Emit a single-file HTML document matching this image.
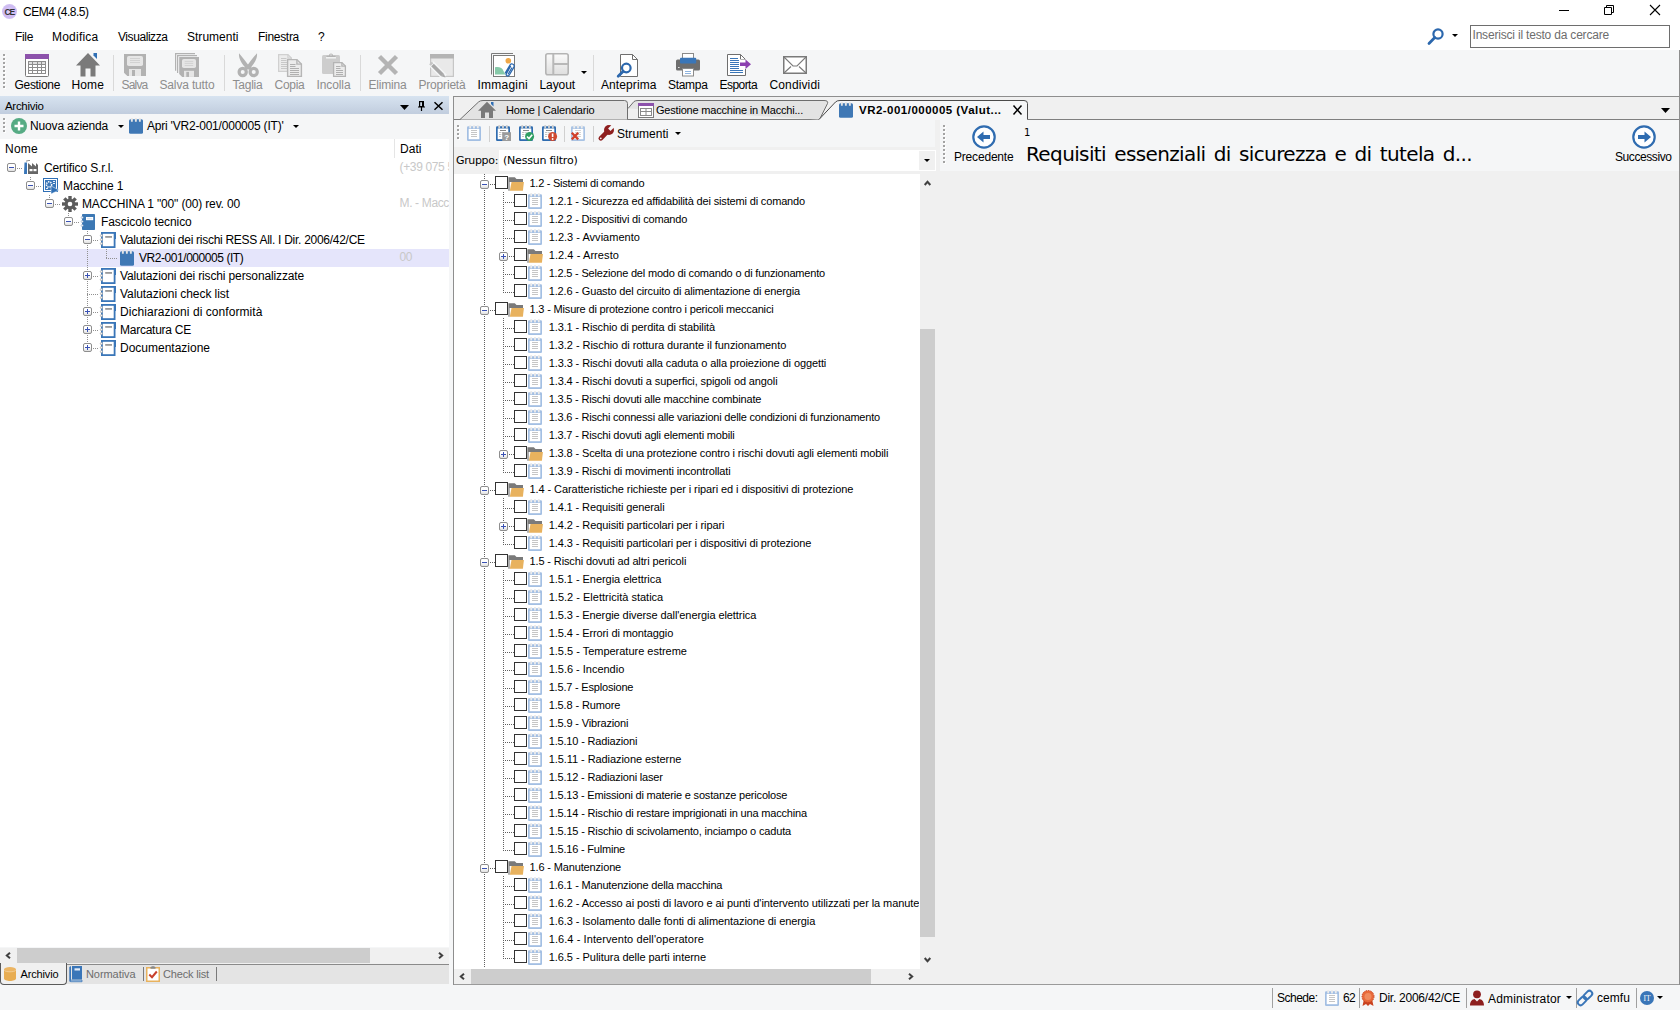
<!DOCTYPE html>
<html lang="it"><head><meta charset="utf-8"><title>CEM4 (4.8.5)</title>
<style>
html,body{margin:0;padding:0;}
body{width:1680px;height:1010px;overflow:hidden;background:#f5f6f7;position:relative;font-family:'Liberation Sans',sans-serif;font-size:12px;}
div,svg{position:absolute;}
svg{overflow:visible;}
</style></head><body>

<div style="left:0px;top:0px;width:1680px;height:50px;background:#fff"></div>
<svg style="left:2px;top:3.5px" width="15" height="15" viewBox="0 0 15 15"><defs><radialGradient id="rg1"><stop offset="0" stop-color="#e2d6fa"/><stop offset="0.700" stop-color="#cdbaf2"/><stop offset="1" stop-color="#c9b6ef" stop-opacity="0.850"/></radialGradient></defs><circle cx="7.500" cy="7.500" r="7.500" fill="url(#rg1)"/><text x="7.300" y="10.700" font-size="8.600" font-weight="bold" text-anchor="middle" font-family="Liberation Sans, sans-serif" fill="#333" letter-spacing="-1.200">CE</text></svg>
<div style="left:23px;top:5px;height:14px;line-height:14px;font-size:12px;color:#000;font-family:'Liberation Sans', sans-serif;white-space:pre;letter-spacing:-0.488px;">CEM4 (4.8.5)</div>
<div style="left:1559px;top:10px;width:10px;height:1px;background:#000"></div>
<svg style="left:1604px;top:5px" width="10" height="10" viewBox="0 0 10 10"><path d="M0.5 2.5h7v7h-7z M2.5 2.5v-2h7v7h-2" stroke="#000" stroke-width="1" fill="none"/></svg>
<svg style="left:1650px;top:5px" width="10" height="10" viewBox="0 0 10 10"><path d="M0 0L10 10M10 0L0 10" stroke="#000" stroke-width="1.1" fill="none"/></svg>
<div style="left:15px;top:30px;height:14px;line-height:14px;font-size:12px;color:#000;font-family:'Liberation Sans', sans-serif;white-space:pre;letter-spacing:-0.336px;">File</div>
<div style="left:52px;top:30px;height:14px;line-height:14px;font-size:12px;color:#000;font-family:'Liberation Sans', sans-serif;white-space:pre;letter-spacing:0.227px;">Modifica</div>
<div style="left:118px;top:30px;height:14px;line-height:14px;font-size:12px;color:#000;font-family:'Liberation Sans', sans-serif;white-space:pre;letter-spacing:-0.431px;">Visualizza</div>
<div style="left:187px;top:30px;height:14px;line-height:14px;font-size:12px;color:#000;font-family:'Liberation Sans', sans-serif;white-space:pre;letter-spacing:0.016px;">Strumenti</div>
<div style="left:258px;top:30px;height:14px;line-height:14px;font-size:12px;color:#000;font-family:'Liberation Sans', sans-serif;white-space:pre;letter-spacing:-0.295px;">Finestra</div>
<div style="left:318px;top:30px;height:14px;line-height:14px;font-size:12px;color:#000;font-family:'Liberation Sans', sans-serif;white-space:pre;letter-spacing:-1.188px;">?</div>
<svg style="left:1427px;top:27px" width="18" height="18" viewBox="0 0 18 18"><circle cx="11" cy="7" r="4.6" fill="none" stroke="#2b67ad" stroke-width="2.2"/><path d="M7.8 10.6L2 16.4" stroke="#2b67ad" stroke-width="2.8" stroke-linecap="round"/></svg>
<svg style="left:1452px;top:34px" width="6" height="3" viewBox="0 0 6 3"><path d="M0 0h6l-3 3z" fill="#000"/></svg>
<div style="left:1470px;top:25px;width:200px;height:23px;border:1px solid #6e6e6e;background:#fff;box-sizing:border-box"></div>
<div style="left:1472.5px;top:28px;height:14px;line-height:14px;font-size:12px;color:#6d6d6d;font-family:'Liberation Sans', sans-serif;white-space:pre;letter-spacing:-0.192px;">Inserisci il testo da cercare</div>
<div style="left:0px;top:50px;width:1680px;height:46px;background:#f5f6f7"></div>
<div style="left:4px;top:55px;width:2px;height:2px;background:#fff"></div>
<div style="left:3px;top:54px;width:2px;height:2px;background:#a3a3a3"></div>
<div style="left:4px;top:59px;width:2px;height:2px;background:#fff"></div>
<div style="left:3px;top:58px;width:2px;height:2px;background:#a3a3a3"></div>
<div style="left:4px;top:63px;width:2px;height:2px;background:#fff"></div>
<div style="left:3px;top:62px;width:2px;height:2px;background:#a3a3a3"></div>
<div style="left:4px;top:67px;width:2px;height:2px;background:#fff"></div>
<div style="left:3px;top:66px;width:2px;height:2px;background:#a3a3a3"></div>
<div style="left:4px;top:71px;width:2px;height:2px;background:#fff"></div>
<div style="left:3px;top:70px;width:2px;height:2px;background:#a3a3a3"></div>
<div style="left:4px;top:75px;width:2px;height:2px;background:#fff"></div>
<div style="left:3px;top:74px;width:2px;height:2px;background:#a3a3a3"></div>
<div style="left:4px;top:79px;width:2px;height:2px;background:#fff"></div>
<div style="left:3px;top:78px;width:2px;height:2px;background:#a3a3a3"></div>
<div style="left:4px;top:83px;width:2px;height:2px;background:#fff"></div>
<div style="left:3px;top:82px;width:2px;height:2px;background:#a3a3a3"></div>
<div style="left:4px;top:87px;width:2px;height:2px;background:#fff"></div>
<div style="left:3px;top:86px;width:2px;height:2px;background:#a3a3a3"></div>
<svg style="left:25px;top:54px" width="24" height="24" viewBox="0 0 24 24"><rect x="0.500" y="0.500" width="23" height="22" rx="1" fill="#fff" stroke="#7a7a7a"/><rect x="0" y="0" width="24" height="5" fill="#8c52ab"/><rect x="3" y="7" width="18" height="13" fill="#8d8d8d"/><rect x="4" y="8" width="3" height="2" fill="#dedede"/><rect x="8" y="8" width="4" height="2" fill="#dedede"/><rect x="13" y="8" width="3" height="2" fill="#dedede"/><rect x="17" y="8" width="3" height="2" fill="#dedede"/><rect x="4" y="11" width="3" height="2" fill="#fff"/><rect x="8" y="11" width="4" height="2" fill="#fff"/><rect x="13" y="11" width="3" height="2" fill="#fff"/><rect x="17" y="11" width="3" height="2" fill="#fff"/><rect x="4" y="14" width="3" height="2" fill="#fff"/><rect x="8" y="14" width="4" height="2" fill="#fff"/><rect x="13" y="14" width="3" height="2" fill="#fff"/><rect x="17" y="14" width="3" height="2" fill="#fff"/><rect x="4" y="17" width="3" height="2" fill="#fff"/><rect x="8" y="17" width="4" height="2" fill="#fff"/><rect x="13" y="17" width="3" height="2" fill="#fff"/><rect x="17" y="17" width="3" height="2" fill="#fff"/></svg>
<div style="left:14.5px;top:78px;height:14px;line-height:14px;font-size:12px;color:#000;font-family:'Liberation Sans', sans-serif;white-space:pre;letter-spacing:-0.316px;">Gestione</div>
<svg style="left:76px;top:53px" width="24" height="24" viewBox="0 0 24 24"><path d="M17.5 0H21V6L17.5 2.500z" fill="#2f6fb5"/><path d="M12 0L0 12.500H4.500V23.500H9.500V15.500H14.500V23.500H19.500V12.500H24z" fill="#7a7a7a"/></svg>
<div style="left:71.5px;top:78px;height:14px;line-height:14px;font-size:12px;color:#000;font-family:'Liberation Sans', sans-serif;white-space:pre;letter-spacing:0.121px;">Home</div>
<svg style="left:124px;top:54px" width="24" height="24" viewBox="0 0 24 24"><path d="M0 0H22V22H3.300L0 18.700z" fill="#b2b2b2"/><rect x="3" y="2" width="16" height="10" rx="1.800" fill="#e6e6e6"/><path d="M6 4.500H16M6 6.500H16M6 8.500H16" stroke="#cfcfcf" stroke-width="0.900"/><rect x="5" y="15" width="12" height="7" fill="#e6e6e6"/><rect x="8" y="16" width="3" height="6" fill="#b2b2b2"/></svg>
<div style="left:121.5px;top:78px;height:14px;line-height:14px;font-size:12px;color:#8d8d8d;font-family:'Liberation Sans', sans-serif;white-space:pre;letter-spacing:-0.806px;">Salva</div>
<svg style="left:175px;top:53px" width="24" height="24" viewBox="0 0 24 24"><path d="M0.600 17.800V0.600H20" fill="none" stroke="#b2b2b2" stroke-width="1.200"/><path d="M2.600 19.900V2.700H22" fill="none" stroke="#b2b2b2" stroke-width="1.200"/><g transform="translate(4.200,4.100)"><path d="M0 0H19.800V19.800H3L0 16.800z" fill="#b2b2b2"/><rect x="2.800" y="1.900" width="14" height="9" rx="1.800" fill="#e6e6e6"/><path d="M5.500 4.300H14M5.500 6.300H14M5.500 8.400H14" stroke="#cfcfcf" stroke-width="0.900"/><rect x="4.800" y="13.700" width="10" height="6.100" fill="#e6e6e6"/><rect x="7.100" y="14.800" width="2.700" height="5" fill="#b2b2b2"/></g></svg>
<div style="left:159.5px;top:78px;height:14px;line-height:14px;font-size:12px;color:#8d8d8d;font-family:'Liberation Sans', sans-serif;white-space:pre;letter-spacing:-0.155px;">Salva tutto</div>
<svg style="left:236px;top:54px" width="24" height="24" viewBox="0 0 24 24"><path d="M3 -0.800C2.500 4 5 9 10.500 15L14.200 13.500C10.500 8.500 6.500 3 3 -0.800z" fill="#b2b2b2"/><path d="M21 -0.800C21.500 4 19 9 13.500 15L9.800 13.500C13.500 8.500 17.500 3 21 -0.800z" fill="#b2b2b2"/><path d="M9.500 12.500H14.500L16.500 15.500H7.500z" fill="#b2b2b2"/><circle cx="6.700" cy="18" r="3.600" fill="none" stroke="#b2b2b2" stroke-width="3.200"/><circle cx="17.700" cy="18" r="3.600" fill="none" stroke="#b2b2b2" stroke-width="3.200"/></svg>
<div style="left:232.5px;top:78px;height:14px;line-height:14px;font-size:12px;color:#8d8d8d;font-family:'Liberation Sans', sans-serif;white-space:pre;letter-spacing:-0.227px;">Taglia</div>
<svg style="left:278px;top:54px" width="24" height="24" viewBox="0 0 24 24"><path d="M0.6 0.6H9.9L13.4 4.1V17.4H0.6z" fill="#ececec" stroke="#d0d0d0" stroke-width="1.2"/><path d="M9.9 0.6V4.1H13.4" fill="none" stroke="#d0d0d0" stroke-width="1.2"/><path d="M3 4.5H8.5" stroke="#c8c8c8" stroke-width="1"/><path d="M3 6.5H8.5" stroke="#c8c8c8" stroke-width="1"/><path d="M3 8.5H11" stroke="#c8c8c8" stroke-width="1"/><path d="M3 10.5H11" stroke="#c8c8c8" stroke-width="1"/><path d="M3 12.5H11" stroke="#c8c8c8" stroke-width="1"/><path d="M3 14.5H11" stroke="#c8c8c8" stroke-width="1"/><path d="M9.6 5.6H18.9L23.4 10.1V22.4H9.6z" fill="#ececec" stroke="#b6b6b6" stroke-width="1.4"/><path d="M18.9 5.6V10.1H23.4" fill="none" stroke="#b6b6b6" stroke-width="1.4"/><path d="M12 10.5H17.5" stroke="#b0b0b0" stroke-width="1"/><path d="M12 12.5H17.5" stroke="#b0b0b0" stroke-width="1"/><path d="M12 14.5H21" stroke="#b0b0b0" stroke-width="1"/><path d="M12 16.5H21" stroke="#b0b0b0" stroke-width="1"/><path d="M12 18.5H21" stroke="#b0b0b0" stroke-width="1"/><path d="M12 20.5H21" stroke="#b0b0b0" stroke-width="1"/></svg>
<div style="left:274.5px;top:78px;height:14px;line-height:14px;font-size:12px;color:#8d8d8d;font-family:'Liberation Sans', sans-serif;white-space:pre;letter-spacing:-0.272px;">Copia</div>
<svg style="left:322px;top:54px" width="24" height="24" viewBox="0 0 24 24"><rect x="0" y="1" width="18" height="19" rx="1.500" fill="#cdcdcd"/><path d="M4 3.800H14" stroke="#f5f6f7" stroke-width="1.400"/><path d="M4.500 3V1.800H7C7 -1.200 11 -1.200 11 1.800H13.500V3z" fill="#b4b4b4"/><circle cx="9" cy="0.900" r="0.700" fill="#f5f6f7"/><path d="M11.6 8.6H19.9L23.4 12.1V22.4H11.6z" fill="#ececec" stroke="#b4b4b4" stroke-width="1.3"/><path d="M19.9 8.6V12.1H23.4" fill="none" stroke="#b4b4b4" stroke-width="1.3"/><path d="M14 12.5H18.5" stroke="#b0b0b0" stroke-width="1"/><path d="M14 14.5H18.5" stroke="#b0b0b0" stroke-width="1"/><path d="M14 16.5H21" stroke="#b0b0b0" stroke-width="1"/><path d="M14 18.5H21" stroke="#b0b0b0" stroke-width="1"/><path d="M14 20.5H21" stroke="#b0b0b0" stroke-width="1"/></svg>
<div style="left:316.5px;top:78px;height:14px;line-height:14px;font-size:12px;color:#8d8d8d;font-family:'Liberation Sans', sans-serif;white-space:pre;letter-spacing:-0.098px;">Incolla</div>
<svg style="left:378px;top:55px" width="24" height="24" viewBox="0 0 24 24"><path d="M1.500 1.500L18.500 18.500M18.500 1.500L1.500 18.500" stroke="#b4b4b4" stroke-width="4.400" fill="none"/></svg>
<div style="left:368.5px;top:78px;height:14px;line-height:14px;font-size:12px;color:#8d8d8d;font-family:'Liberation Sans', sans-serif;white-space:pre;letter-spacing:-0.194px;">Elimina</div>
<svg style="left:430px;top:54px" width="24" height="24" viewBox="0 0 24 24"><rect x="0.600" y="0.600" width="22.800" height="21.800" fill="#e9e9e9" stroke="#c6c6c6" stroke-width="1.200"/><rect x="0" y="0" width="24" height="4.500" fill="#b4b4b4"/><path d="M1 9.500L14.500 23" stroke="#f5f6f7" stroke-width="6.500" fill="none"/><path d="M2.500 11L12.500 21" stroke="#a8a8a8" stroke-width="3.800" fill="none"/><path d="M0.500 9L2 10.500" stroke="#c4c4c4" stroke-width="3.800" fill="none"/><path d="M11.200 22.300L13.800 19.700L15.500 23.500z" fill="#a8a8a8"/></svg>
<div style="left:418.5px;top:78px;height:14px;line-height:14px;font-size:12px;color:#8d8d8d;font-family:'Liberation Sans', sans-serif;white-space:pre;letter-spacing:-0.189px;">Proprietà</div>
<svg style="left:491px;top:53px" width="24" height="24" viewBox="0 0 24 24"><path d="M0.500 21.500V0.500H22" fill="none" stroke="#7a7a7a"/><rect x="2.500" y="2.500" width="21" height="21" fill="#fff" stroke="#7a7a7a"/><circle cx="17.300" cy="7.700" r="2.800" fill="#f0a848"/><path d="M4 21.500V14.300C8 13.300 11.500 15 12.500 18L14.500 21.500z" fill="#86c9a9"/><g fill="none" stroke="#2b67ad" stroke-width="1.300" stroke-linecap="round"><path d="M19.500 13.500L15.500 20.300C14.300 22.500 17 24 18.300 22L22.800 14.300C24.300 11.700 20.500 9.500 19 12.100L14.500 19.700"/><path d="M20.800 15L17.300 21"/></g></svg>
<div style="left:477.5px;top:78px;height:14px;line-height:14px;font-size:12px;color:#000;font-family:'Liberation Sans', sans-serif;white-space:pre;letter-spacing:0.227px;">Immagini</div>
<svg style="left:545px;top:53px" width="24" height="24" viewBox="0 0 24 24"><defs><linearGradient id="lg1" x1="0" y1="0" x2="0" y2="1"><stop offset="0" stop-color="#fbfbfb"/><stop offset="1" stop-color="#dedede"/></linearGradient></defs><rect x="0.800" y="0.800" width="22.400" height="20.900" rx="2" fill="url(#lg1)" stroke="#b4b4b4" stroke-width="1.600"/><path d="M8.300 1V21.500M8.300 11H23" stroke="#b8b8b8" stroke-width="2" fill="none"/></svg>
<div style="left:539.5px;top:78px;height:14px;line-height:14px;font-size:12px;color:#000;font-family:'Liberation Sans', sans-serif;white-space:pre;letter-spacing:-0.089px;">Layout</div>
<svg style="left:581px;top:71px" width="6" height="3" viewBox="0 0 6 3"><path d="M0 0h6l-3 3z" fill="#000"/></svg>
<svg style="left:617px;top:54px" width="24" height="24" viewBox="0 0 24 24"><path d="M3.500 0.500H15.500L20.500 5.500V22.500H3.500z" fill="#fff" stroke="#6e6e6e"/><path d="M15.500 0.500V5.500H20.500" fill="none" stroke="#6e6e6e"/><circle cx="9.300" cy="14" r="4.300" fill="#fff" stroke="#2b67ad" stroke-width="2.200"/><path d="M6 17.500L1.200 22.300" stroke="#2b67ad" stroke-width="2.800" stroke-linecap="round"/></svg>
<div style="left:601px;top:78px;height:14px;line-height:14px;font-size:12px;color:#000;font-family:'Liberation Sans', sans-serif;white-space:pre;letter-spacing:0.089px;">Anteprima</div>
<svg style="left:676px;top:53px" width="24" height="24" viewBox="0 0 24 24"><rect x="6.500" y="0.500" width="11" height="6" fill="#fff" stroke="#8a8a8a"/><rect x="0" y="6.500" width="24" height="11" rx="1.500" fill="#6e6e6e"/><rect x="4" y="4.800" width="16.200" height="5.700" rx="1" fill="#3a76b8"/><rect x="2" y="14" width="1.600" height="1" fill="#e0e0e0"/><rect x="6.500" y="15.500" width="11" height="7.500" fill="#fff" stroke="#8a8a8a"/><path d="M9 18.500H15M9 20.500H15" stroke="#8fb4de" stroke-width="1"/></svg>
<div style="left:668px;top:78px;height:14px;line-height:14px;font-size:12px;color:#000;font-family:'Liberation Sans', sans-serif;white-space:pre;letter-spacing:-0.31px;">Stampa</div>
<svg style="left:727px;top:54px" width="24" height="24" viewBox="0 0 24 24"><path d="M0.500 0.500H13.500L18.500 5.500V21.500H0.500z" fill="#fff" stroke="#6e6e6e"/><path d="M13.500 0.500V5.500H18.500" fill="none" stroke="#6e6e6e"/><path d="M3 4.5H11" stroke="#3a76b8" stroke-width="1"/><path d="M3 6.5H16" stroke="#3a76b8" stroke-width="1"/><path d="M3 8.5H16" stroke="#3a76b8" stroke-width="1"/><path d="M3 10.5H16" stroke="#3a76b8" stroke-width="1"/><path d="M3 12.5H16" stroke="#3a76b8" stroke-width="1"/><path d="M3 14.5H16" stroke="#3a76b8" stroke-width="1"/><path d="M3 16.5H16" stroke="#3a76b8" stroke-width="1"/><path d="M3 18.5H16" stroke="#3a76b8" stroke-width="1"/><path d="M12 5.500H19V15H12z" fill="#fff"/><path d="M13 8.500H18.500V5.500L24 10.200L18.500 15V12H13z" fill="#8c3fb0"/></svg>
<div style="left:719.5px;top:78px;height:14px;line-height:14px;font-size:12px;color:#000;font-family:'Liberation Sans', sans-serif;white-space:pre;letter-spacing:-0.551px;">Esporta</div>
<svg style="left:783px;top:56px" width="24" height="24" viewBox="0 0 24 24"><rect x="0.750" y="0.750" width="22.500" height="16.500" fill="#fff" stroke="#7a7a7a" stroke-width="1.500"/><path d="M1 1L10 10H14L23 1M1 17L8 10.500M23 17L16 10.500" fill="none" stroke="#7a7a7a" stroke-width="1.100"/></svg>
<div style="left:769.5px;top:78px;height:14px;line-height:14px;font-size:12px;color:#000;font-family:'Liberation Sans', sans-serif;white-space:pre;letter-spacing:0.127px;">Condividi</div>
<div style="left:113px;top:55px;width:1px;height:36px;background:#d9d9d9"></div>
<div style="left:224px;top:55px;width:1px;height:36px;background:#d9d9d9"></div>
<div style="left:360px;top:55px;width:1px;height:36px;background:#d9d9d9"></div>
<div style="left:593px;top:55px;width:1px;height:36px;background:#d9d9d9"></div>
<div style="left:0px;top:96px;width:449px;height:18px;background:linear-gradient(#d7e3f0,#c1cdde)"></div>
<div style="left:5px;top:100px;height:12px;line-height:12px;font-size:11.5px;color:#000;font-family:'Liberation Sans', sans-serif;white-space:pre;letter-spacing:-0.301px;">Archivio</div>
<svg style="left:400px;top:105px" width="9" height="5" viewBox="0 0 9 5"><path d="M0 0h9l-4.5 5z" fill="#000"/></svg>
<svg style="left:418px;top:101px" width="7" height="10" viewBox="0 0 7 10"><path d="M1.600 0.600H5.400V5.500H1.600z" fill="none" stroke="#000" stroke-width="1.200"/><path d="M4.700 0.600V5.500" stroke="#000" stroke-width="1.400"/><path d="M0 6H7M3.500 6V10" stroke="#000" stroke-width="1.200" fill="none"/></svg>
<svg style="left:434px;top:102px" width="9" height="8" viewBox="0 0 9 8"><path d="M0.500 0.300L8.500 7.700M8.500 0.300L0.500 7.700" stroke="#000" stroke-width="1.500" fill="none"/></svg>
<div style="left:0px;top:114px;width:449px;height:25px;background:#f5f6f7"></div>
<div style="left:4px;top:119px;width:2px;height:2px;background:#fff"></div>
<div style="left:3px;top:118px;width:2px;height:2px;background:#a3a3a3"></div>
<div style="left:4px;top:123px;width:2px;height:2px;background:#fff"></div>
<div style="left:3px;top:122px;width:2px;height:2px;background:#a3a3a3"></div>
<div style="left:4px;top:127px;width:2px;height:2px;background:#fff"></div>
<div style="left:3px;top:126px;width:2px;height:2px;background:#a3a3a3"></div>
<div style="left:4px;top:131px;width:2px;height:2px;background:#fff"></div>
<div style="left:3px;top:130px;width:2px;height:2px;background:#a3a3a3"></div>
<svg style="left:11px;top:118px" width="16" height="16" viewBox="0 0 16 16"><circle cx="8" cy="8" r="8" fill="#56ab84"/><path d="M8 3.500V12.500M3.500 8H12.500" stroke="#fff" stroke-width="2.400" fill="none"/></svg>
<div style="left:30px;top:119px;height:14px;line-height:14px;font-size:12px;color:#000;font-family:'Liberation Sans', sans-serif;white-space:pre;letter-spacing:-0.159px;">Nuova azienda</div>
<svg style="left:118px;top:125px" width="6" height="3" viewBox="0 0 6 3"><path d="M0 0h6l-3 3z" fill="#000"/></svg>
<svg style="left:129px;top:118px" width="14" height="16" viewBox="0 0 14 16"><rect x="0" y="1.200" width="14" height="14.600" rx="1.500" fill="#3f78b5"/><rect x="1.900" y="0" width="1.900" height="3.800" rx="0.500" fill="#e6e6e6"/><rect x="5.900" y="0" width="1.900" height="3.800" rx="0.500" fill="#e6e6e6"/><rect x="9.900" y="0" width="1.900" height="3.800" rx="0.500" fill="#e6e6e6"/></svg>
<div style="left:147px;top:119px;height:14px;line-height:14px;font-size:12px;color:#000;font-family:'Liberation Sans', sans-serif;white-space:pre;letter-spacing:-0.211px;">Apri 'VR2-001/000005 (IT)'</div>
<svg style="left:293px;top:125px" width="6" height="3" viewBox="0 0 6 3"><path d="M0 0h6l-3 3z" fill="#000"/></svg>
<div style="left:0px;top:139px;width:449px;height:808px;background:#fff"></div>
<div style="left:5px;top:142px;height:14px;line-height:14px;font-size:12px;color:#000;font-family:'Liberation Sans', sans-serif;white-space:pre;letter-spacing:0.246px;">Nome</div>
<div style="left:400px;top:142px;height:14px;line-height:14px;font-size:12px;color:#000;font-family:'Liberation Sans', sans-serif;white-space:pre;letter-spacing:0.039px;">Dati</div>
<div style="left:394px;top:139px;width:1px;height:19px;background:#e5e5e5"></div>
<div style="left:0px;top:249px;width:449px;height:18px;background:#e5e5fb"></div>
<div style="left:17px;top:168px;width:6px;height:1px;background:repeating-linear-gradient(90deg,#909090 0 1px,transparent 1px 2px)"></div>
<div style="left:36px;top:186px;width:6px;height:1px;background:repeating-linear-gradient(90deg,#909090 0 1px,transparent 1px 2px)"></div>
<div style="left:55px;top:204px;width:6px;height:1px;background:repeating-linear-gradient(90deg,#909090 0 1px,transparent 1px 2px)"></div>
<div style="left:74px;top:222px;width:6px;height:1px;background:repeating-linear-gradient(90deg,#909090 0 1px,transparent 1px 2px)"></div>
<div style="left:93px;top:240px;width:6px;height:1px;background:repeating-linear-gradient(90deg,#909090 0 1px,transparent 1px 2px)"></div>
<div style="left:106px;top:258px;width:12px;height:1px;background:repeating-linear-gradient(90deg,#909090 0 1px,transparent 1px 2px)"></div>
<div style="left:93px;top:276px;width:6px;height:1px;background:repeating-linear-gradient(90deg,#909090 0 1px,transparent 1px 2px)"></div>
<div style="left:87px;top:294px;width:12px;height:1px;background:repeating-linear-gradient(90deg,#909090 0 1px,transparent 1px 2px)"></div>
<div style="left:93px;top:312px;width:6px;height:1px;background:repeating-linear-gradient(90deg,#909090 0 1px,transparent 1px 2px)"></div>
<div style="left:93px;top:330px;width:6px;height:1px;background:repeating-linear-gradient(90deg,#909090 0 1px,transparent 1px 2px)"></div>
<div style="left:93px;top:348px;width:6px;height:1px;background:repeating-linear-gradient(90deg,#909090 0 1px,transparent 1px 2px)"></div>
<div style="left:30px;top:177px;width:1px;height:4px;background:repeating-linear-gradient(180deg,#909090 0 1px,transparent 1px 2px)"></div>
<div style="left:49px;top:195px;width:1px;height:4px;background:repeating-linear-gradient(180deg,#909090 0 1px,transparent 1px 2px)"></div>
<div style="left:68px;top:213px;width:1px;height:4px;background:repeating-linear-gradient(180deg,#909090 0 1px,transparent 1px 2px)"></div>
<div style="left:87px;top:231px;width:1px;height:4px;background:repeating-linear-gradient(180deg,#909090 0 1px,transparent 1px 2px)"></div>
<div style="left:87px;top:245px;width:1px;height:98px;background:repeating-linear-gradient(180deg,#909090 0 1px,transparent 1px 2px)"></div>
<div style="left:106px;top:249px;width:1px;height:10px;background:repeating-linear-gradient(180deg,#909090 0 1px,transparent 1px 2px)"></div>
<svg style="left:7px;top:163px" width="9" height="9" viewBox="0 0 9 9"><defs><linearGradient id="eg" x1="0" y1="0" x2="0" y2="1"><stop offset="0.450" stop-color="#fff"/><stop offset="1" stop-color="#dcdcdc"/></linearGradient></defs><rect x="0.500" y="0.500" width="8" height="8" rx="1.500" fill="url(#eg)" stroke="#8e8e8e"/><path d="M2 4.500H7" stroke="#3a52b4" stroke-width="1"/></svg>
<svg style="left:24px;top:160px" width="14" height="16" viewBox="0 0 14 16"><path d="M0.500 2.500H3V14H0z" fill="#3a76b8"/><path d="M2 0.800L6 0V0.800L2 1.600z" fill="#6e6e6e"/><path d="M4 14V3L8 6.500V3L12 6.500V3L14 5V14z" fill="#666"/><rect x="5.500" y="9" width="3" height="2.200" fill="#fff"/><rect x="9.500" y="9" width="3" height="2.200" fill="#fff"/></svg>
<div style="left:44px;top:161px;height:14px;line-height:14px;font-size:12px;color:#000;font-family:'Liberation Sans', sans-serif;white-space:pre;letter-spacing:-0.116px;">Certifico S.r.l.</div>
<div style="left:399.5px;top:160px;height:14px;line-height:14px;font-size:12px;color:#c8c8c8;font-family:'Liberation Sans', sans-serif;white-space:pre;letter-spacing:-0.35px;">(+39 075 5</div>
<svg style="left:26px;top:181px" width="9" height="9" viewBox="0 0 9 9"><defs><linearGradient id="eg" x1="0" y1="0" x2="0" y2="1"><stop offset="0.450" stop-color="#fff"/><stop offset="1" stop-color="#dcdcdc"/></linearGradient></defs><rect x="0.500" y="0.500" width="8" height="8" rx="1.500" fill="url(#eg)" stroke="#8e8e8e"/><path d="M2 4.500H7" stroke="#3a52b4" stroke-width="1"/></svg>
<svg style="left:43px;top:178px" width="16" height="16" viewBox="0 0 16 16"><rect x="0.500" y="0.500" width="14" height="13" fill="#fff" stroke="#2f6fb5" stroke-width="1"/><rect x="2" y="2" width="11" height="10" fill="#3a76b8"/><circle cx="6" cy="6.500" r="2.600" fill="none" stroke="#fff" stroke-width="1.600" stroke-dasharray="1.300 0.900"/><path d="M10 3.500H12M10 5.500H12M3 10.500H5" stroke="#e8f0fa" stroke-width="1"/><path d="M8 8L16 12L8 16z" fill="#2f6fb5" stroke="#fff" stroke-width="0.500"/></svg>
<div style="left:63px;top:179px;height:14px;line-height:14px;font-size:12px;color:#000;font-family:'Liberation Sans', sans-serif;white-space:pre;letter-spacing:-0.108px;">Macchine 1</div>
<svg style="left:45px;top:199px" width="9" height="9" viewBox="0 0 9 9"><defs><linearGradient id="eg" x1="0" y1="0" x2="0" y2="1"><stop offset="0.450" stop-color="#fff"/><stop offset="1" stop-color="#dcdcdc"/></linearGradient></defs><rect x="0.500" y="0.500" width="8" height="8" rx="1.500" fill="url(#eg)" stroke="#8e8e8e"/><path d="M2 4.500H7" stroke="#3a52b4" stroke-width="1"/></svg>
<svg style="left:62px;top:196px" width="16" height="16" viewBox="0 0 16 16"><g transform="translate(8,8)"><rect x="-1.700" y="-8" width="3.400" height="5" fill="#5c5c5c" transform="rotate(0)"/><rect x="-1.700" y="-8" width="3.400" height="5" fill="#5c5c5c" transform="rotate(45)"/><rect x="-1.700" y="-8" width="3.400" height="5" fill="#5c5c5c" transform="rotate(90)"/><rect x="-1.700" y="-8" width="3.400" height="5" fill="#5c5c5c" transform="rotate(135)"/><rect x="-1.700" y="-8" width="3.400" height="5" fill="#5c5c5c" transform="rotate(180)"/><rect x="-1.700" y="-8" width="3.400" height="5" fill="#5c5c5c" transform="rotate(225)"/><rect x="-1.700" y="-8" width="3.400" height="5" fill="#5c5c5c" transform="rotate(270)"/><rect x="-1.700" y="-8" width="3.400" height="5" fill="#5c5c5c" transform="rotate(315)"/><circle r="5.300" fill="#5c5c5c"/><circle r="2.300" fill="#fff"/></g></svg>
<div style="left:82px;top:197px;height:14px;line-height:14px;font-size:12px;color:#000;font-family:'Liberation Sans', sans-serif;white-space:pre;letter-spacing:-0.156px;">MACCHINA 1 "00" (00) rev. 00</div>
<div style="left:399.5px;top:196px;height:14px;line-height:14px;font-size:12px;color:#c8c8c8;font-family:'Liberation Sans', sans-serif;white-space:pre;letter-spacing:-0.35px;">M. - Macc</div>
<svg style="left:64px;top:217px" width="9" height="9" viewBox="0 0 9 9"><defs><linearGradient id="eg" x1="0" y1="0" x2="0" y2="1"><stop offset="0.450" stop-color="#fff"/><stop offset="1" stop-color="#dcdcdc"/></linearGradient></defs><rect x="0.500" y="0.500" width="8" height="8" rx="1.500" fill="url(#eg)" stroke="#8e8e8e"/><path d="M2 4.500H7" stroke="#3a52b4" stroke-width="1"/></svg>
<svg style="left:81px;top:214px" width="14" height="16" viewBox="0 0 14 16"><rect x="1" y="0" width="13" height="16" rx="0.800" fill="#3c78b4"/><circle cx="1.200" cy="3.500" r="1.100" fill="#f4f4f4" stroke="#7a9cc4" stroke-width="0.500"/><circle cx="1.200" cy="7.500" r="1.100" fill="#f4f4f4" stroke="#7a9cc4" stroke-width="0.500"/><circle cx="1.200" cy="11.500" r="1.100" fill="#f4f4f4" stroke="#7a9cc4" stroke-width="0.500"/><rect x="5" y="3" width="7.200" height="3.200" fill="#fff"/><rect x="6" y="3.800" width="5.200" height="1.500" fill="#dfe8f3"/></svg>
<div style="left:101px;top:215px;height:14px;line-height:14px;font-size:12px;color:#000;font-family:'Liberation Sans', sans-serif;white-space:pre;letter-spacing:-0.079px;">Fascicolo tecnico</div>
<svg style="left:83px;top:235px" width="9" height="9" viewBox="0 0 9 9"><defs><linearGradient id="eg" x1="0" y1="0" x2="0" y2="1"><stop offset="0.450" stop-color="#fff"/><stop offset="1" stop-color="#dcdcdc"/></linearGradient></defs><rect x="0.500" y="0.500" width="8" height="8" rx="1.500" fill="url(#eg)" stroke="#8e8e8e"/><path d="M2 4.500H7" stroke="#3a52b4" stroke-width="1"/></svg>
<svg style="left:100px;top:232px" width="16" height="16" viewBox="0 0 16 16"><rect x="1.900" y="0.900" width="12.700" height="14.200" fill="#fff" stroke="#3a76b8" stroke-width="1.800"/><rect x="14" y="0" width="2" height="7" fill="#3a76b8"/><circle cx="1.400" cy="3.600" r="1.100" fill="#f4f4f4" stroke="#9a9a9a" stroke-width="0.600"/><circle cx="1.400" cy="7.600" r="1.100" fill="#f4f4f4" stroke="#9a9a9a" stroke-width="0.600"/><circle cx="1.400" cy="11.600" r="1.100" fill="#f4f4f4" stroke="#9a9a9a" stroke-width="0.600"/><rect x="5.200" y="4" width="6.800" height="1.800" fill="#9a9a9a"/></svg>
<div style="left:120px;top:233px;height:14px;line-height:14px;font-size:12px;color:#000;font-family:'Liberation Sans', sans-serif;white-space:pre;letter-spacing:-0.276px;">Valutazioni dei rischi RESS All. I Dir. 2006/42/CE</div>
<svg style="left:120px;top:250px" width="14" height="16" viewBox="0 0 14 16"><rect x="0" y="1.200" width="14" height="14.600" rx="1.500" fill="#3f78b5"/><rect x="1.900" y="0" width="1.900" height="3.800" rx="0.500" fill="#e6e6e6"/><rect x="5.900" y="0" width="1.900" height="3.800" rx="0.500" fill="#e6e6e6"/><rect x="9.900" y="0" width="1.900" height="3.800" rx="0.500" fill="#e6e6e6"/></svg>
<div style="left:139px;top:251px;height:14px;line-height:14px;font-size:12px;color:#000;font-family:'Liberation Sans', sans-serif;white-space:pre;letter-spacing:-0.444px;">VR2-001/000005 (IT)</div>
<div style="left:399.5px;top:250px;height:14px;line-height:14px;font-size:12px;color:#c8c8c8;font-family:'Liberation Sans', sans-serif;white-space:pre;letter-spacing:-0.35px;">00</div>
<svg style="left:83px;top:271px" width="9" height="9" viewBox="0 0 9 9"><defs><linearGradient id="eg" x1="0" y1="0" x2="0" y2="1"><stop offset="0.450" stop-color="#fff"/><stop offset="1" stop-color="#dcdcdc"/></linearGradient></defs><rect x="0.500" y="0.500" width="8" height="8" rx="1.500" fill="url(#eg)" stroke="#8e8e8e"/><path d="M2 4.500H7" stroke="#3a52b4" stroke-width="1"/><path d="M4.500 2V7" stroke="#3a52b4" stroke-width="1"/></svg>
<svg style="left:100px;top:268px" width="16" height="16" viewBox="0 0 16 16"><rect x="1.900" y="0.900" width="12.700" height="14.200" fill="#fff" stroke="#3a76b8" stroke-width="1.800"/><rect x="14" y="0" width="2" height="7" fill="#3a76b8"/><circle cx="1.400" cy="3.600" r="1.100" fill="#f4f4f4" stroke="#9a9a9a" stroke-width="0.600"/><circle cx="1.400" cy="7.600" r="1.100" fill="#f4f4f4" stroke="#9a9a9a" stroke-width="0.600"/><circle cx="1.400" cy="11.600" r="1.100" fill="#f4f4f4" stroke="#9a9a9a" stroke-width="0.600"/><rect x="5.200" y="4" width="6.800" height="1.800" fill="#9a9a9a"/></svg>
<div style="left:120px;top:269px;height:14px;line-height:14px;font-size:12px;color:#000;font-family:'Liberation Sans', sans-serif;white-space:pre;letter-spacing:-0.141px;">Valutazioni dei rischi personalizzate</div>
<svg style="left:100px;top:286px" width="16" height="16" viewBox="0 0 16 16"><rect x="1.900" y="0.900" width="12.700" height="14.200" fill="#fff" stroke="#3a76b8" stroke-width="1.800"/><rect x="14" y="0" width="2" height="7" fill="#3a76b8"/><circle cx="1.400" cy="3.600" r="1.100" fill="#f4f4f4" stroke="#9a9a9a" stroke-width="0.600"/><circle cx="1.400" cy="7.600" r="1.100" fill="#f4f4f4" stroke="#9a9a9a" stroke-width="0.600"/><circle cx="1.400" cy="11.600" r="1.100" fill="#f4f4f4" stroke="#9a9a9a" stroke-width="0.600"/><rect x="5.200" y="4" width="6.800" height="1.800" fill="#9a9a9a"/></svg>
<div style="left:120px;top:287px;height:14px;line-height:14px;font-size:12px;color:#000;font-family:'Liberation Sans', sans-serif;white-space:pre;letter-spacing:-0.068px;">Valutazioni check list</div>
<svg style="left:83px;top:307px" width="9" height="9" viewBox="0 0 9 9"><defs><linearGradient id="eg" x1="0" y1="0" x2="0" y2="1"><stop offset="0.450" stop-color="#fff"/><stop offset="1" stop-color="#dcdcdc"/></linearGradient></defs><rect x="0.500" y="0.500" width="8" height="8" rx="1.500" fill="url(#eg)" stroke="#8e8e8e"/><path d="M2 4.500H7" stroke="#3a52b4" stroke-width="1"/><path d="M4.500 2V7" stroke="#3a52b4" stroke-width="1"/></svg>
<svg style="left:100px;top:304px" width="16" height="16" viewBox="0 0 16 16"><rect x="1.900" y="0.900" width="12.700" height="14.200" fill="#fff" stroke="#3a76b8" stroke-width="1.800"/><rect x="14" y="0" width="2" height="7" fill="#3a76b8"/><circle cx="1.400" cy="3.600" r="1.100" fill="#f4f4f4" stroke="#9a9a9a" stroke-width="0.600"/><circle cx="1.400" cy="7.600" r="1.100" fill="#f4f4f4" stroke="#9a9a9a" stroke-width="0.600"/><circle cx="1.400" cy="11.600" r="1.100" fill="#f4f4f4" stroke="#9a9a9a" stroke-width="0.600"/><rect x="5.200" y="4" width="6.800" height="1.800" fill="#9a9a9a"/></svg>
<div style="left:120px;top:305px;height:14px;line-height:14px;font-size:12px;color:#000;font-family:'Liberation Sans', sans-serif;white-space:pre;letter-spacing:0.062px;">Dichiarazioni di conformità</div>
<svg style="left:83px;top:325px" width="9" height="9" viewBox="0 0 9 9"><defs><linearGradient id="eg" x1="0" y1="0" x2="0" y2="1"><stop offset="0.450" stop-color="#fff"/><stop offset="1" stop-color="#dcdcdc"/></linearGradient></defs><rect x="0.500" y="0.500" width="8" height="8" rx="1.500" fill="url(#eg)" stroke="#8e8e8e"/><path d="M2 4.500H7" stroke="#3a52b4" stroke-width="1"/><path d="M4.500 2V7" stroke="#3a52b4" stroke-width="1"/></svg>
<svg style="left:100px;top:322px" width="16" height="16" viewBox="0 0 16 16"><rect x="1.900" y="0.900" width="12.700" height="14.200" fill="#fff" stroke="#3a76b8" stroke-width="1.800"/><rect x="14" y="0" width="2" height="7" fill="#3a76b8"/><circle cx="1.400" cy="3.600" r="1.100" fill="#f4f4f4" stroke="#9a9a9a" stroke-width="0.600"/><circle cx="1.400" cy="7.600" r="1.100" fill="#f4f4f4" stroke="#9a9a9a" stroke-width="0.600"/><circle cx="1.400" cy="11.600" r="1.100" fill="#f4f4f4" stroke="#9a9a9a" stroke-width="0.600"/><rect x="5.200" y="4" width="6.800" height="1.800" fill="#9a9a9a"/></svg>
<div style="left:120px;top:323px;height:14px;line-height:14px;font-size:12px;color:#000;font-family:'Liberation Sans', sans-serif;white-space:pre;letter-spacing:-0.253px;">Marcatura CE</div>
<svg style="left:83px;top:343px" width="9" height="9" viewBox="0 0 9 9"><defs><linearGradient id="eg" x1="0" y1="0" x2="0" y2="1"><stop offset="0.450" stop-color="#fff"/><stop offset="1" stop-color="#dcdcdc"/></linearGradient></defs><rect x="0.500" y="0.500" width="8" height="8" rx="1.500" fill="url(#eg)" stroke="#8e8e8e"/><path d="M2 4.500H7" stroke="#3a52b4" stroke-width="1"/><path d="M4.500 2V7" stroke="#3a52b4" stroke-width="1"/></svg>
<svg style="left:100px;top:340px" width="16" height="16" viewBox="0 0 16 16"><rect x="1.900" y="0.900" width="12.700" height="14.200" fill="#fff" stroke="#3a76b8" stroke-width="1.800"/><rect x="14" y="0" width="2" height="7" fill="#3a76b8"/><circle cx="1.400" cy="3.600" r="1.100" fill="#f4f4f4" stroke="#9a9a9a" stroke-width="0.600"/><circle cx="1.400" cy="7.600" r="1.100" fill="#f4f4f4" stroke="#9a9a9a" stroke-width="0.600"/><circle cx="1.400" cy="11.600" r="1.100" fill="#f4f4f4" stroke="#9a9a9a" stroke-width="0.600"/><rect x="5.200" y="4" width="6.800" height="1.800" fill="#9a9a9a"/></svg>
<div style="left:120px;top:341px;height:14px;line-height:14px;font-size:12px;color:#000;font-family:'Liberation Sans', sans-serif;white-space:pre;letter-spacing:-0.004px;">Documentazione</div>
<div style="left:449px;top:139px;width:4px;height:850px;background:#f5f6f7"></div>
<div style="left:0px;top:948px;width:449px;height:16px;background:#f0f0f0"></div>
<div style="left:17px;top:948px;width:353px;height:15px;background:#cdcdcd"></div>
<svg style="left:5px;top:952px" width="6" height="7" viewBox="0 0 6 7"><path d="M5 0.700L1.800 3.500L5 6.300" stroke="#404040" stroke-width="2" fill="none"/></svg>
<svg style="left:438px;top:952px" width="6" height="7" viewBox="0 0 6 7"><path d="M1 0.700L4.200 3.500L1 6.300" stroke="#404040" stroke-width="2" fill="none"/></svg>
<div style="left:0px;top:964px;width:449px;height:20px;background:#e4e4e4;border-top:1px solid #8a8a8a;box-sizing:border-box"></div>
<div style="left:0px;top:963px;width:67px;height:22px;background:#f0f0f0;border:1px solid #5a5a5a;border-top:none;border-radius:0 0 4px 4px;box-sizing:border-box"></div>
<svg style="left:3.5px;top:967px" width="12" height="14" viewBox="0 0 12 14"><path d="M0 2.500V11.500C0 14.800 12 14.800 12 11.500V2.500z" fill="#e8ad52"/><ellipse cx="6" cy="2.500" rx="6" ry="2.500" fill="#ecb563"/><path d="M0.300 3.300C1.500 5.300 10.500 5.300 11.700 3.300" fill="none" stroke="#f3cf98" stroke-width="0.900"/></svg>
<div style="left:20.5px;top:968px;height:12px;line-height:12px;font-size:11px;color:#000;font-family:'Liberation Sans', sans-serif;white-space:pre;letter-spacing:-0.141px;">Archivio</div>
<svg style="left:69px;top:966px" width="13" height="16" viewBox="0 0 13 16"><path d="M0.300 1L2 0V15.500H0.300z" fill="#3a76b8"/><rect x="3" y="0" width="10" height="13.500" fill="#3a76b8"/><path d="M1.500 14.200H13V15.700H1.500z" fill="#fff" stroke="#3a76b8" stroke-width="0.900"/><rect x="5.500" y="2.300" width="5.500" height="2.200" fill="#e3ecf7"/></svg>
<div style="left:86px;top:968px;height:12px;line-height:12px;font-size:11px;color:#6d6d6d;font-family:'Liberation Sans', sans-serif;white-space:pre;letter-spacing:-0.069px;">Normativa</div>
<div style="left:143px;top:967px;width:1px;height:14px;background:#7a7a7a"></div>
<svg style="left:146px;top:966px" width="14" height="16" viewBox="0 0 14 16"><rect x="0.750" y="1.750" width="12.500" height="13.500" fill="#fff" stroke="#e8b25e" stroke-width="1.500"/><path d="M4.500 2.800V1.500C5.500 -0.300 8.500 -0.300 9.500 1.500V2.800z" fill="#8a8a8a"/><path d="M3.300 8.500L6 11.200L10.800 5.500" fill="none" stroke="#c8402b" stroke-width="2"/></svg>
<div style="left:163px;top:968px;height:12px;line-height:12px;font-size:11px;color:#6d6d6d;font-family:'Liberation Sans', sans-serif;white-space:pre;letter-spacing:-0.169px;">Check list</div>
<div style="left:216px;top:967px;width:1px;height:14px;background:#7a7a7a"></div>
<div style="left:453px;top:96px;width:1227px;height:889px;background:#f0f0f0;border-left:1px solid #8e8e8e;border-top:1px solid #8e8e8e;box-sizing:border-box"></div>
<div style="left:454px;top:119px;width:1226px;height:1px;background:#7f7f7f"></div>
<svg style="left:454px;top:97px" width="600" height="24" viewBox="0 0 600 24"><path d="M6 22.5 L24.5 5 Q26 3.5 29 3.5 H170.500 Q173.5 3.5 173.5 6.5 V22.5" fill="#e3e3e3" stroke="#6e6e6e"/><path d="M174 11.5 L180 4.5 Q181.5 3.5 184 3.5 H370 Q374.5 3.5 373.5 6.5 L366 21.5 L365 22.5" fill="#e3e3e3" stroke="#6e6e6e"/><path d="M365 22.5 L381.5 5 Q383 3.5 386 3.5 H570 Q573.5 3.5 573.5 6.5 V23.5 H365" fill="#f5f6f7" stroke="none"/><path d="M365 22.5 L381.5 5 Q383 3.5 386 3.5 H570 Q573.5 3.5 573.5 6.5 V22.5" fill="none" stroke="#4a4a4a"/></svg>
<svg style="left:478px;top:102px" width="18" height="16" viewBox="0 0 18 16"><path d="M13 0H15.500V4.500L13 2z" fill="#2f6fb5"/><path d="M9 -0.300L0 8.700H3V16H7V10.500H11V16H15V8.700H18z" fill="#7a7a7a"/></svg>
<div style="left:506px;top:104px;height:12px;line-height:12px;font-size:11px;color:#000;font-family:'Liberation Sans', sans-serif;white-space:pre;letter-spacing:-0.177px;">Home | Calendario</div>
<svg style="left:638px;top:102px" width="16" height="16" viewBox="0 0 16 16"><rect x="0.5" y="1.5" width="15" height="14" fill="#fff" stroke="#7a7a7a"/><rect x="0" y="1" width="16" height="3" fill="#8c52ab"/><rect x="2.500" y="6.500" width="11" height="7" fill="none" stroke="#8a8a8a"/><path d="M2.500 9.500H13.500M8 6.500V13.500" stroke="#8a8a8a" fill="none"/></svg>
<div style="left:656px;top:104px;height:12px;line-height:12px;font-size:11px;color:#000;font-family:'Liberation Sans', sans-serif;white-space:pre;letter-spacing:-0.195px;">Gestione macchine in Macchi...</div>
<svg style="left:839px;top:102px" width="14" height="16" viewBox="0 0 14 16"><rect x="0" y="1.200" width="14" height="14.600" rx="1.500" fill="#3f78b5"/><rect x="1.900" y="0" width="1.900" height="3.800" rx="0.500" fill="#e6e6e6"/><rect x="5.900" y="0" width="1.900" height="3.800" rx="0.500" fill="#e6e6e6"/><rect x="9.900" y="0" width="1.900" height="3.800" rx="0.500" fill="#e6e6e6"/></svg>
<div style="left:859px;top:104px;height:12px;line-height:12px;font-size:11.5px;color:#000;font-family:'Liberation Sans', sans-serif;white-space:pre;letter-spacing:0.477px;font-weight:bold;">VR2-001/000005 (Valut...</div>
<svg style="left:1013px;top:105px" width="9" height="10" viewBox="0 0 9 10"><path d="M0.5 0.5L8.5 9.5M8.5 0.5L0.5 9.5" stroke="#000" stroke-width="1.5" fill="none"/></svg>
<svg style="left:1661px;top:108px" width="9" height="5" viewBox="0 0 9 5"><path d="M0 0h9l-4.5 5z" fill="#000"/></svg>
<div style="left:454px;top:120px;width:481px;height:27px;background:#f5f6f7"></div>
<div style="left:458px;top:126px;width:2px;height:2px;background:#fff"></div>
<div style="left:457px;top:125px;width:2px;height:2px;background:#a3a3a3"></div>
<div style="left:458px;top:130px;width:2px;height:2px;background:#fff"></div>
<div style="left:457px;top:129px;width:2px;height:2px;background:#a3a3a3"></div>
<div style="left:458px;top:134px;width:2px;height:2px;background:#fff"></div>
<div style="left:457px;top:133px;width:2px;height:2px;background:#a3a3a3"></div>
<div style="left:458px;top:138px;width:2px;height:2px;background:#fff"></div>
<div style="left:457px;top:137px;width:2px;height:2px;background:#a3a3a3"></div>
<svg style="left:467px;top:125px" width="14" height="16" viewBox="0 0 14 16"><rect x="0" y="1.200" width="14" height="14.800" rx="1.200" fill="#a3bfe3"/><rect x="1.700" y="4" width="10.600" height="10.200" fill="#fff"/><rect x="2.300" y="0" width="1.800" height="3.400" fill="#ececec"/><rect x="6.100" y="0" width="1.800" height="3.400" fill="#ececec"/><rect x="9.900" y="0" width="1.800" height="3.400" fill="#ececec"/><path d="M4 5.500H10M4 7.500H10M4 9.500H10M4 11.500H10" stroke="#c6c6c6" stroke-width="1"/></svg>
<div style="left:489px;top:126px;width:1px;height:16px;background:#d0d0d0"></div>
<svg style="left:496px;top:125px" width="16" height="16" viewBox="0 0 16 16"><rect x="0" y="1.200" width="14" height="14.800" rx="1.200" fill="#2f6cb0"/><rect x="1.700" y="3.500" width="10.600" height="10.700" fill="#fff"/><rect x="2.300" y="0" width="1.800" height="3.400" fill="#d2d2d2"/><rect x="6.100" y="0" width="1.800" height="3.400" fill="#d2d2d2"/><rect x="9.900" y="0" width="1.800" height="3.400" fill="#d2d2d2"/><path d="M4 5.500H10" stroke="#8a8a8a" stroke-width="1"/><path d="M3.500 7.500H4.500M3.500 9.500H4.500M3.500 11.500H4.500" stroke="#8a8a8a" stroke-width="1"/><path d="M5.500 7.500H8M5.500 9.500H7" stroke="#d0d0d0" stroke-width="1"/><rect x="6.200" y="7.200" width="8.800" height="8.800" fill="#9b9b9b"/><text x="10.600" y="14.700" font-size="8" font-weight="bold" text-anchor="middle" fill="#fff" font-family="Liberation Sans, sans-serif">?</text></svg>
<svg style="left:519px;top:125px" width="16" height="16" viewBox="0 0 16 16"><rect x="0" y="1.200" width="14" height="14.800" rx="1.200" fill="#2f6cb0"/><rect x="1.700" y="3.500" width="10.600" height="10.700" fill="#fff"/><rect x="2.300" y="0" width="1.800" height="3.400" fill="#d2d2d2"/><rect x="6.100" y="0" width="1.800" height="3.400" fill="#d2d2d2"/><rect x="9.900" y="0" width="1.800" height="3.400" fill="#d2d2d2"/><path d="M4 5.500H10" stroke="#8a8a8a" stroke-width="1"/><path d="M3.500 7.500H4.500M3.500 9.500H4.500M3.500 11.500H4.500" stroke="#8a8a8a" stroke-width="1"/><path d="M5.500 7.500H8M5.500 9.500H7" stroke="#d0d0d0" stroke-width="1"/><circle cx="10.600" cy="11.500" r="4.500" fill="#2f9e62"/><path d="M8 11.500L10 13.500L13.200 9.800" fill="none" stroke="#fff" stroke-width="1.600"/></svg>
<svg style="left:542px;top:125px" width="16" height="16" viewBox="0 0 16 16"><rect x="0" y="1.200" width="14" height="14.800" rx="1.200" fill="#2f6cb0"/><rect x="1.700" y="3.500" width="10.600" height="10.700" fill="#fff"/><rect x="2.300" y="0" width="1.800" height="3.400" fill="#d2d2d2"/><rect x="6.100" y="0" width="1.800" height="3.400" fill="#d2d2d2"/><rect x="9.900" y="0" width="1.800" height="3.400" fill="#d2d2d2"/><path d="M4 5.500H10" stroke="#8a8a8a" stroke-width="1"/><path d="M3.500 7.500H4.500M3.500 9.500H4.500M3.500 11.500H4.500" stroke="#8a8a8a" stroke-width="1"/><path d="M5.500 7.500H8M5.500 9.500H7" stroke="#d0d0d0" stroke-width="1"/><circle cx="10.600" cy="11.500" r="4.500" fill="#cf4a30"/><path d="M10.600 8.500V12" stroke="#fff" stroke-width="1.600"/><circle cx="10.600" cy="14" r="0.900" fill="#fff"/></svg>
<div style="left:564px;top:126px;width:1px;height:16px;background:#d0d0d0"></div>
<svg style="left:571px;top:125px" width="14" height="16" viewBox="0 0 14 16"><rect x="0" y="1.200" width="14" height="14.800" rx="1.200" fill="#a9c3e4"/><rect x="1.700" y="4" width="10.600" height="10.200" fill="#fff"/><rect x="2.300" y="0" width="1.800" height="3.400" fill="#ececec"/><rect x="6.100" y="0" width="1.800" height="3.400" fill="#ececec"/><rect x="9.900" y="0" width="1.800" height="3.400" fill="#ececec"/><path d="M4 5.500H10M4 7.500H10M4 9.500H10M4 11.500H10" stroke="#d4d4d4" stroke-width="1"/><path d="M0.800 7.800L7.200 14.400M7.200 7.800L0.800 14.400" stroke="#d1402b" stroke-width="2.300" fill="none"/></svg>
<div style="left:593px;top:126px;width:1px;height:16px;background:#d0d0d0"></div>
<svg style="left:598px;top:125px" width="16" height="16" viewBox="0 0 16 16"><path d="M2.800 13.300L9.500 6.500" stroke="#8e1f1f" stroke-width="4.600" stroke-linecap="round" fill="none"/><circle cx="11" cy="5" r="5" fill="#8e1f1f"/><path d="M11.300 4.700L17.500 -1.500" stroke="#f5f6f7" stroke-width="3.400" fill="none"/><circle cx="2.800" cy="13.300" r="0.900" fill="#f5f6f7"/></svg>
<div style="left:617px;top:127px;height:14px;line-height:14px;font-size:12px;color:#000;font-family:'Liberation Sans', sans-serif;white-space:pre;letter-spacing:0.016px;">Strumenti</div>
<svg style="left:675px;top:132px" width="6" height="3" viewBox="0 0 6 3"><path d="M0 0h6l-3 3z" fill="#000"/></svg>
<div style="left:456px;top:154px;height:13px;line-height:13px;font-size:11px;color:#000;font-family:'DejaVu Sans', 'Liberation Sans', sans-serif;white-space:pre;letter-spacing:-0.346px;">Gruppo:</div>
<div style="left:499px;top:150px;width:437px;height:21px;background:#fff"></div>
<div style="left:503px;top:154px;height:13px;line-height:13px;font-size:11px;color:#000;font-family:'DejaVu Sans', 'Liberation Sans', sans-serif;white-space:pre;letter-spacing:-0.22px;">(Nessun filtro)</div>
<div style="left:919px;top:151px;width:16px;height:19px;background:#f0f0f0"></div>
<svg style="left:924px;top:159px" width="6" height="3" viewBox="0 0 6 3"><path d="M0 0h6l-3 3z" fill="#000"/></svg>
<div style="left:454px;top:174px;width:466px;height:795px;background:#fff;overflow:hidden"></div>
<div style="left:484px;top:174px;width:1px;height:793px;background:repeating-linear-gradient(180deg,#606060 0 1px,transparent 1px 2px)"></div>
<div style="left:503px;top:192px;width:1px;height:101px;background:repeating-linear-gradient(180deg,#606060 0 1px,transparent 1px 2px)"></div>
<div style="left:503px;top:318px;width:1px;height:155px;background:repeating-linear-gradient(180deg,#606060 0 1px,transparent 1px 2px)"></div>
<div style="left:503px;top:498px;width:1px;height:47px;background:repeating-linear-gradient(180deg,#606060 0 1px,transparent 1px 2px)"></div>
<div style="left:503px;top:570px;width:1px;height:281px;background:repeating-linear-gradient(180deg,#606060 0 1px,transparent 1px 2px)"></div>
<div style="left:503px;top:876px;width:1px;height:83px;background:repeating-linear-gradient(180deg,#606060 0 1px,transparent 1px 2px)"></div>
<svg style="left:480px;top:180px" width="9" height="9" viewBox="0 0 9 9"><defs><linearGradient id="eg" x1="0" y1="0" x2="0" y2="1"><stop offset="0.450" stop-color="#fff"/><stop offset="1" stop-color="#dcdcdc"/></linearGradient></defs><rect x="0.500" y="0.500" width="8" height="8" rx="1.500" fill="url(#eg)" stroke="#8e8e8e"/><path d="M2 4.500H7" stroke="#3a52b4" stroke-width="1"/></svg>
<div style="left:490px;top:184px;width:5px;height:1px;background:repeating-linear-gradient(90deg,#606060 0 1px,transparent 1px 2px)"></div>
<div style="left:495px;top:176px;width:13px;height:13px;border:1px solid #333;background:#fff;box-sizing:border-box"></div>
<svg style="left:508px;top:177px" width="16" height="15" viewBox="0 0 16 15"><path d="M0.400 0.200H6.800L8.500 2H15V5H1.600V13.700H0.400z" fill="#7a7a7a"/><path d="M3.500 5.100H15.900L14.900 13.700H1.900z" fill="#e8b25e"/></svg>
<div style="left:529.5px;top:177px;width:389.5px;height:12px;line-height:12px;overflow:hidden;white-space:pre;font-size:11px;letter-spacing:-0.261px;font-family:'Liberation Sans', sans-serif">1.2 - Sistemi di comando</div>
<div style="left:505px;top:202px;width:9px;height:1px;background:repeating-linear-gradient(90deg,#606060 0 1px,transparent 1px 2px)"></div>
<div style="left:514px;top:194px;width:13px;height:13px;border:1px solid #333;background:#fff;box-sizing:border-box"></div>
<svg style="left:528px;top:193px" width="14" height="16" viewBox="0 0 14 16"><rect x="0" y="1.200" width="14" height="14.800" rx="1.200" fill="#a3bfe3"/><rect x="1.700" y="4" width="10.600" height="10.200" fill="#fff"/><rect x="2.300" y="0" width="1.800" height="3.400" fill="#ececec"/><rect x="6.100" y="0" width="1.800" height="3.400" fill="#ececec"/><rect x="9.900" y="0" width="1.800" height="3.400" fill="#ececec"/><path d="M4 5.500H10M4 7.500H10M4 9.500H10M4 11.500H10" stroke="#c6c6c6" stroke-width="1"/></svg>
<div style="left:548.7px;top:195px;width:370.29999999999995px;height:12px;line-height:12px;overflow:hidden;white-space:pre;font-size:11px;letter-spacing:-0.158px;font-family:'Liberation Sans', sans-serif">1.2.1 - Sicurezza ed affidabilità dei sistemi di comando</div>
<div style="left:505px;top:220px;width:9px;height:1px;background:repeating-linear-gradient(90deg,#606060 0 1px,transparent 1px 2px)"></div>
<div style="left:514px;top:212px;width:13px;height:13px;border:1px solid #333;background:#fff;box-sizing:border-box"></div>
<svg style="left:528px;top:211px" width="14" height="16" viewBox="0 0 14 16"><rect x="0" y="1.200" width="14" height="14.800" rx="1.200" fill="#a3bfe3"/><rect x="1.700" y="4" width="10.600" height="10.200" fill="#fff"/><rect x="2.300" y="0" width="1.800" height="3.400" fill="#ececec"/><rect x="6.100" y="0" width="1.800" height="3.400" fill="#ececec"/><rect x="9.900" y="0" width="1.800" height="3.400" fill="#ececec"/><path d="M4 5.500H10M4 7.500H10M4 9.500H10M4 11.500H10" stroke="#c6c6c6" stroke-width="1"/></svg>
<div style="left:548.7px;top:213px;width:370.29999999999995px;height:12px;line-height:12px;overflow:hidden;white-space:pre;font-size:11px;letter-spacing:-0.173px;font-family:'Liberation Sans', sans-serif">1.2.2 - Dispositivi di comando</div>
<div style="left:505px;top:238px;width:9px;height:1px;background:repeating-linear-gradient(90deg,#606060 0 1px,transparent 1px 2px)"></div>
<div style="left:514px;top:230px;width:13px;height:13px;border:1px solid #333;background:#fff;box-sizing:border-box"></div>
<svg style="left:528px;top:229px" width="14" height="16" viewBox="0 0 14 16"><rect x="0" y="1.200" width="14" height="14.800" rx="1.200" fill="#a3bfe3"/><rect x="1.700" y="4" width="10.600" height="10.200" fill="#fff"/><rect x="2.300" y="0" width="1.800" height="3.400" fill="#ececec"/><rect x="6.100" y="0" width="1.800" height="3.400" fill="#ececec"/><rect x="9.900" y="0" width="1.800" height="3.400" fill="#ececec"/><path d="M4 5.500H10M4 7.500H10M4 9.500H10M4 11.500H10" stroke="#c6c6c6" stroke-width="1"/></svg>
<div style="left:548.7px;top:231px;width:370.29999999999995px;height:12px;line-height:12px;overflow:hidden;white-space:pre;font-size:11px;letter-spacing:0.016px;font-family:'Liberation Sans', sans-serif">1.2.3 - Avviamento</div>
<svg style="left:499px;top:252px" width="9" height="9" viewBox="0 0 9 9"><defs><linearGradient id="eg" x1="0" y1="0" x2="0" y2="1"><stop offset="0.450" stop-color="#fff"/><stop offset="1" stop-color="#dcdcdc"/></linearGradient></defs><rect x="0.500" y="0.500" width="8" height="8" rx="1.500" fill="url(#eg)" stroke="#8e8e8e"/><path d="M2 4.500H7" stroke="#3a52b4" stroke-width="1"/><path d="M4.500 2V7" stroke="#3a52b4" stroke-width="1"/></svg>
<div style="left:509px;top:256px;width:5px;height:1px;background:repeating-linear-gradient(90deg,#606060 0 1px,transparent 1px 2px)"></div>
<div style="left:514px;top:248px;width:13px;height:13px;border:1px solid #333;background:#fff;box-sizing:border-box"></div>
<svg style="left:527px;top:249px" width="16" height="15" viewBox="0 0 16 15"><path d="M0.400 0.200H6.800L8.500 2H15V5H1.600V13.700H0.400z" fill="#7a7a7a"/><path d="M3.500 5.100H15.900L14.900 13.700H1.900z" fill="#e8b25e"/></svg>
<div style="left:548.7px;top:249px;width:370.29999999999995px;height:12px;line-height:12px;overflow:hidden;white-space:pre;font-size:11px;letter-spacing:0.08px;font-family:'Liberation Sans', sans-serif">1.2.4 - Arresto</div>
<div style="left:505px;top:274px;width:9px;height:1px;background:repeating-linear-gradient(90deg,#606060 0 1px,transparent 1px 2px)"></div>
<div style="left:514px;top:266px;width:13px;height:13px;border:1px solid #333;background:#fff;box-sizing:border-box"></div>
<svg style="left:528px;top:265px" width="14" height="16" viewBox="0 0 14 16"><rect x="0" y="1.200" width="14" height="14.800" rx="1.200" fill="#a3bfe3"/><rect x="1.700" y="4" width="10.600" height="10.200" fill="#fff"/><rect x="2.300" y="0" width="1.800" height="3.400" fill="#ececec"/><rect x="6.100" y="0" width="1.800" height="3.400" fill="#ececec"/><rect x="9.900" y="0" width="1.800" height="3.400" fill="#ececec"/><path d="M4 5.500H10M4 7.500H10M4 9.500H10M4 11.500H10" stroke="#c6c6c6" stroke-width="1"/></svg>
<div style="left:548.7px;top:267px;width:370.29999999999995px;height:12px;line-height:12px;overflow:hidden;white-space:pre;font-size:11px;letter-spacing:-0.187px;font-family:'Liberation Sans', sans-serif">1.2.5 - Selezione del modo di comando o di funzionamento</div>
<div style="left:505px;top:292px;width:9px;height:1px;background:repeating-linear-gradient(90deg,#606060 0 1px,transparent 1px 2px)"></div>
<div style="left:514px;top:284px;width:13px;height:13px;border:1px solid #333;background:#fff;box-sizing:border-box"></div>
<svg style="left:528px;top:283px" width="14" height="16" viewBox="0 0 14 16"><rect x="0" y="1.200" width="14" height="14.800" rx="1.200" fill="#a3bfe3"/><rect x="1.700" y="4" width="10.600" height="10.200" fill="#fff"/><rect x="2.300" y="0" width="1.800" height="3.400" fill="#ececec"/><rect x="6.100" y="0" width="1.800" height="3.400" fill="#ececec"/><rect x="9.900" y="0" width="1.800" height="3.400" fill="#ececec"/><path d="M4 5.500H10M4 7.500H10M4 9.500H10M4 11.500H10" stroke="#c6c6c6" stroke-width="1"/></svg>
<div style="left:548.7px;top:285px;width:370.29999999999995px;height:12px;line-height:12px;overflow:hidden;white-space:pre;font-size:11px;letter-spacing:-0.145px;font-family:'Liberation Sans', sans-serif">1.2.6 - Guasto del circuito di alimentazione di energia</div>
<svg style="left:480px;top:306px" width="9" height="9" viewBox="0 0 9 9"><defs><linearGradient id="eg" x1="0" y1="0" x2="0" y2="1"><stop offset="0.450" stop-color="#fff"/><stop offset="1" stop-color="#dcdcdc"/></linearGradient></defs><rect x="0.500" y="0.500" width="8" height="8" rx="1.500" fill="url(#eg)" stroke="#8e8e8e"/><path d="M2 4.500H7" stroke="#3a52b4" stroke-width="1"/></svg>
<div style="left:490px;top:310px;width:5px;height:1px;background:repeating-linear-gradient(90deg,#606060 0 1px,transparent 1px 2px)"></div>
<div style="left:495px;top:302px;width:13px;height:13px;border:1px solid #333;background:#fff;box-sizing:border-box"></div>
<svg style="left:508px;top:303px" width="16" height="15" viewBox="0 0 16 15"><path d="M0.400 0.200H6.800L8.500 2H15V5H1.600V13.700H0.400z" fill="#7a7a7a"/><path d="M3.500 5.100H15.900L14.900 13.700H1.900z" fill="#e8b25e"/></svg>
<div style="left:529.5px;top:303px;width:389.5px;height:12px;line-height:12px;overflow:hidden;white-space:pre;font-size:11px;letter-spacing:-0.169px;font-family:'Liberation Sans', sans-serif">1.3 - Misure di protezione contro i pericoli meccanici</div>
<div style="left:505px;top:328px;width:9px;height:1px;background:repeating-linear-gradient(90deg,#606060 0 1px,transparent 1px 2px)"></div>
<div style="left:514px;top:320px;width:13px;height:13px;border:1px solid #333;background:#fff;box-sizing:border-box"></div>
<svg style="left:528px;top:319px" width="14" height="16" viewBox="0 0 14 16"><rect x="0" y="1.200" width="14" height="14.800" rx="1.200" fill="#a3bfe3"/><rect x="1.700" y="4" width="10.600" height="10.200" fill="#fff"/><rect x="2.300" y="0" width="1.800" height="3.400" fill="#ececec"/><rect x="6.100" y="0" width="1.800" height="3.400" fill="#ececec"/><rect x="9.900" y="0" width="1.800" height="3.400" fill="#ececec"/><path d="M4 5.500H10M4 7.500H10M4 9.500H10M4 11.500H10" stroke="#c6c6c6" stroke-width="1"/></svg>
<div style="left:548.7px;top:321px;width:370.29999999999995px;height:12px;line-height:12px;overflow:hidden;white-space:pre;font-size:11px;letter-spacing:-0.11px;font-family:'Liberation Sans', sans-serif">1.3.1 - Rischio di perdita di stabilità</div>
<div style="left:505px;top:346px;width:9px;height:1px;background:repeating-linear-gradient(90deg,#606060 0 1px,transparent 1px 2px)"></div>
<div style="left:514px;top:338px;width:13px;height:13px;border:1px solid #333;background:#fff;box-sizing:border-box"></div>
<svg style="left:528px;top:337px" width="14" height="16" viewBox="0 0 14 16"><rect x="0" y="1.200" width="14" height="14.800" rx="1.200" fill="#a3bfe3"/><rect x="1.700" y="4" width="10.600" height="10.200" fill="#fff"/><rect x="2.300" y="0" width="1.800" height="3.400" fill="#ececec"/><rect x="6.100" y="0" width="1.800" height="3.400" fill="#ececec"/><rect x="9.900" y="0" width="1.800" height="3.400" fill="#ececec"/><path d="M4 5.500H10M4 7.500H10M4 9.500H10M4 11.500H10" stroke="#c6c6c6" stroke-width="1"/></svg>
<div style="left:548.7px;top:339px;width:370.29999999999995px;height:12px;line-height:12px;overflow:hidden;white-space:pre;font-size:11px;letter-spacing:-0.054px;font-family:'Liberation Sans', sans-serif">1.3.2 - Rischio di rottura durante il funzionamento</div>
<div style="left:505px;top:364px;width:9px;height:1px;background:repeating-linear-gradient(90deg,#606060 0 1px,transparent 1px 2px)"></div>
<div style="left:514px;top:356px;width:13px;height:13px;border:1px solid #333;background:#fff;box-sizing:border-box"></div>
<svg style="left:528px;top:355px" width="14" height="16" viewBox="0 0 14 16"><rect x="0" y="1.200" width="14" height="14.800" rx="1.200" fill="#a3bfe3"/><rect x="1.700" y="4" width="10.600" height="10.200" fill="#fff"/><rect x="2.300" y="0" width="1.800" height="3.400" fill="#ececec"/><rect x="6.100" y="0" width="1.800" height="3.400" fill="#ececec"/><rect x="9.900" y="0" width="1.800" height="3.400" fill="#ececec"/><path d="M4 5.500H10M4 7.500H10M4 9.500H10M4 11.500H10" stroke="#c6c6c6" stroke-width="1"/></svg>
<div style="left:548.7px;top:357px;width:370.29999999999995px;height:12px;line-height:12px;overflow:hidden;white-space:pre;font-size:11px;letter-spacing:-0.1px;font-family:'Liberation Sans', sans-serif">1.3.3 - Rischi dovuti alla caduta o alla proiezione di oggetti</div>
<div style="left:505px;top:382px;width:9px;height:1px;background:repeating-linear-gradient(90deg,#606060 0 1px,transparent 1px 2px)"></div>
<div style="left:514px;top:374px;width:13px;height:13px;border:1px solid #333;background:#fff;box-sizing:border-box"></div>
<svg style="left:528px;top:373px" width="14" height="16" viewBox="0 0 14 16"><rect x="0" y="1.200" width="14" height="14.800" rx="1.200" fill="#a3bfe3"/><rect x="1.700" y="4" width="10.600" height="10.200" fill="#fff"/><rect x="2.300" y="0" width="1.800" height="3.400" fill="#ececec"/><rect x="6.100" y="0" width="1.800" height="3.400" fill="#ececec"/><rect x="9.900" y="0" width="1.800" height="3.400" fill="#ececec"/><path d="M4 5.500H10M4 7.500H10M4 9.500H10M4 11.500H10" stroke="#c6c6c6" stroke-width="1"/></svg>
<div style="left:548.7px;top:375px;width:370.29999999999995px;height:12px;line-height:12px;overflow:hidden;white-space:pre;font-size:11px;letter-spacing:-0.115px;font-family:'Liberation Sans', sans-serif">1.3.4 - Rischi dovuti a superfici, spigoli od angoli</div>
<div style="left:505px;top:400px;width:9px;height:1px;background:repeating-linear-gradient(90deg,#606060 0 1px,transparent 1px 2px)"></div>
<div style="left:514px;top:392px;width:13px;height:13px;border:1px solid #333;background:#fff;box-sizing:border-box"></div>
<svg style="left:528px;top:391px" width="14" height="16" viewBox="0 0 14 16"><rect x="0" y="1.200" width="14" height="14.800" rx="1.200" fill="#a3bfe3"/><rect x="1.700" y="4" width="10.600" height="10.200" fill="#fff"/><rect x="2.300" y="0" width="1.800" height="3.400" fill="#ececec"/><rect x="6.100" y="0" width="1.800" height="3.400" fill="#ececec"/><rect x="9.900" y="0" width="1.800" height="3.400" fill="#ececec"/><path d="M4 5.500H10M4 7.500H10M4 9.500H10M4 11.500H10" stroke="#c6c6c6" stroke-width="1"/></svg>
<div style="left:548.7px;top:393px;width:370.29999999999995px;height:12px;line-height:12px;overflow:hidden;white-space:pre;font-size:11px;letter-spacing:-0.182px;font-family:'Liberation Sans', sans-serif">1.3.5 - Rischi dovuti alle macchine combinate</div>
<div style="left:505px;top:418px;width:9px;height:1px;background:repeating-linear-gradient(90deg,#606060 0 1px,transparent 1px 2px)"></div>
<div style="left:514px;top:410px;width:13px;height:13px;border:1px solid #333;background:#fff;box-sizing:border-box"></div>
<svg style="left:528px;top:409px" width="14" height="16" viewBox="0 0 14 16"><rect x="0" y="1.200" width="14" height="14.800" rx="1.200" fill="#a3bfe3"/><rect x="1.700" y="4" width="10.600" height="10.200" fill="#fff"/><rect x="2.300" y="0" width="1.800" height="3.400" fill="#ececec"/><rect x="6.100" y="0" width="1.800" height="3.400" fill="#ececec"/><rect x="9.900" y="0" width="1.800" height="3.400" fill="#ececec"/><path d="M4 5.500H10M4 7.500H10M4 9.500H10M4 11.500H10" stroke="#c6c6c6" stroke-width="1"/></svg>
<div style="left:548.7px;top:411px;width:370.29999999999995px;height:12px;line-height:12px;overflow:hidden;white-space:pre;font-size:11px;letter-spacing:-0.194px;font-family:'Liberation Sans', sans-serif">1.3.6 - Rischi connessi alle variazioni delle condizioni di funzionamento</div>
<div style="left:505px;top:436px;width:9px;height:1px;background:repeating-linear-gradient(90deg,#606060 0 1px,transparent 1px 2px)"></div>
<div style="left:514px;top:428px;width:13px;height:13px;border:1px solid #333;background:#fff;box-sizing:border-box"></div>
<svg style="left:528px;top:427px" width="14" height="16" viewBox="0 0 14 16"><rect x="0" y="1.200" width="14" height="14.800" rx="1.200" fill="#a3bfe3"/><rect x="1.700" y="4" width="10.600" height="10.200" fill="#fff"/><rect x="2.300" y="0" width="1.800" height="3.400" fill="#ececec"/><rect x="6.100" y="0" width="1.800" height="3.400" fill="#ececec"/><rect x="9.900" y="0" width="1.800" height="3.400" fill="#ececec"/><path d="M4 5.500H10M4 7.500H10M4 9.500H10M4 11.500H10" stroke="#c6c6c6" stroke-width="1"/></svg>
<div style="left:548.7px;top:429px;width:370.29999999999995px;height:12px;line-height:12px;overflow:hidden;white-space:pre;font-size:11px;letter-spacing:-0.176px;font-family:'Liberation Sans', sans-serif">1.3.7 - Rischi dovuti agli elementi mobili</div>
<svg style="left:499px;top:450px" width="9" height="9" viewBox="0 0 9 9"><defs><linearGradient id="eg" x1="0" y1="0" x2="0" y2="1"><stop offset="0.450" stop-color="#fff"/><stop offset="1" stop-color="#dcdcdc"/></linearGradient></defs><rect x="0.500" y="0.500" width="8" height="8" rx="1.500" fill="url(#eg)" stroke="#8e8e8e"/><path d="M2 4.500H7" stroke="#3a52b4" stroke-width="1"/><path d="M4.500 2V7" stroke="#3a52b4" stroke-width="1"/></svg>
<div style="left:509px;top:454px;width:5px;height:1px;background:repeating-linear-gradient(90deg,#606060 0 1px,transparent 1px 2px)"></div>
<div style="left:514px;top:446px;width:13px;height:13px;border:1px solid #333;background:#fff;box-sizing:border-box"></div>
<svg style="left:527px;top:447px" width="16" height="15" viewBox="0 0 16 15"><path d="M0.400 0.200H6.800L8.500 2H15V5H1.600V13.700H0.400z" fill="#7a7a7a"/><path d="M3.500 5.100H15.900L14.900 13.700H1.900z" fill="#e8b25e"/></svg>
<div style="left:548.7px;top:447px;width:370.29999999999995px;height:12px;line-height:12px;overflow:hidden;white-space:pre;font-size:11px;letter-spacing:-0.126px;font-family:'Liberation Sans', sans-serif">1.3.8 - Scelta di una protezione contro i rischi dovuti agli elementi mobili</div>
<div style="left:505px;top:472px;width:9px;height:1px;background:repeating-linear-gradient(90deg,#606060 0 1px,transparent 1px 2px)"></div>
<div style="left:514px;top:464px;width:13px;height:13px;border:1px solid #333;background:#fff;box-sizing:border-box"></div>
<svg style="left:528px;top:463px" width="14" height="16" viewBox="0 0 14 16"><rect x="0" y="1.200" width="14" height="14.800" rx="1.200" fill="#a3bfe3"/><rect x="1.700" y="4" width="10.600" height="10.200" fill="#fff"/><rect x="2.300" y="0" width="1.800" height="3.400" fill="#ececec"/><rect x="6.100" y="0" width="1.800" height="3.400" fill="#ececec"/><rect x="9.900" y="0" width="1.800" height="3.400" fill="#ececec"/><path d="M4 5.500H10M4 7.500H10M4 9.500H10M4 11.500H10" stroke="#c6c6c6" stroke-width="1"/></svg>
<div style="left:548.7px;top:465px;width:370.29999999999995px;height:12px;line-height:12px;overflow:hidden;white-space:pre;font-size:11px;letter-spacing:-0.144px;font-family:'Liberation Sans', sans-serif">1.3.9 - Rischi di movimenti incontrollati</div>
<svg style="left:480px;top:486px" width="9" height="9" viewBox="0 0 9 9"><defs><linearGradient id="eg" x1="0" y1="0" x2="0" y2="1"><stop offset="0.450" stop-color="#fff"/><stop offset="1" stop-color="#dcdcdc"/></linearGradient></defs><rect x="0.500" y="0.500" width="8" height="8" rx="1.500" fill="url(#eg)" stroke="#8e8e8e"/><path d="M2 4.500H7" stroke="#3a52b4" stroke-width="1"/></svg>
<div style="left:490px;top:490px;width:5px;height:1px;background:repeating-linear-gradient(90deg,#606060 0 1px,transparent 1px 2px)"></div>
<div style="left:495px;top:482px;width:13px;height:13px;border:1px solid #333;background:#fff;box-sizing:border-box"></div>
<svg style="left:508px;top:483px" width="16" height="15" viewBox="0 0 16 15"><path d="M0.400 0.200H6.800L8.500 2H15V5H1.600V13.700H0.400z" fill="#7a7a7a"/><path d="M3.500 5.100H15.900L14.900 13.700H1.900z" fill="#e8b25e"/></svg>
<div style="left:529.5px;top:483px;width:389.5px;height:12px;line-height:12px;overflow:hidden;white-space:pre;font-size:11px;letter-spacing:-0.077px;font-family:'Liberation Sans', sans-serif">1.4 - Caratteristiche richieste per i ripari ed i dispositivi di protezione</div>
<div style="left:505px;top:508px;width:9px;height:1px;background:repeating-linear-gradient(90deg,#606060 0 1px,transparent 1px 2px)"></div>
<div style="left:514px;top:500px;width:13px;height:13px;border:1px solid #333;background:#fff;box-sizing:border-box"></div>
<svg style="left:528px;top:499px" width="14" height="16" viewBox="0 0 14 16"><rect x="0" y="1.200" width="14" height="14.800" rx="1.200" fill="#a3bfe3"/><rect x="1.700" y="4" width="10.600" height="10.200" fill="#fff"/><rect x="2.300" y="0" width="1.800" height="3.400" fill="#ececec"/><rect x="6.100" y="0" width="1.800" height="3.400" fill="#ececec"/><rect x="9.900" y="0" width="1.800" height="3.400" fill="#ececec"/><path d="M4 5.500H10M4 7.500H10M4 9.500H10M4 11.500H10" stroke="#c6c6c6" stroke-width="1"/></svg>
<div style="left:548.7px;top:501px;width:370.29999999999995px;height:12px;line-height:12px;overflow:hidden;white-space:pre;font-size:11px;letter-spacing:-0.109px;font-family:'Liberation Sans', sans-serif">1.4.1 - Requisiti generali</div>
<svg style="left:499px;top:522px" width="9" height="9" viewBox="0 0 9 9"><defs><linearGradient id="eg" x1="0" y1="0" x2="0" y2="1"><stop offset="0.450" stop-color="#fff"/><stop offset="1" stop-color="#dcdcdc"/></linearGradient></defs><rect x="0.500" y="0.500" width="8" height="8" rx="1.500" fill="url(#eg)" stroke="#8e8e8e"/><path d="M2 4.500H7" stroke="#3a52b4" stroke-width="1"/><path d="M4.500 2V7" stroke="#3a52b4" stroke-width="1"/></svg>
<div style="left:509px;top:526px;width:5px;height:1px;background:repeating-linear-gradient(90deg,#606060 0 1px,transparent 1px 2px)"></div>
<div style="left:514px;top:518px;width:13px;height:13px;border:1px solid #333;background:#fff;box-sizing:border-box"></div>
<svg style="left:527px;top:519px" width="16" height="15" viewBox="0 0 16 15"><path d="M0.400 0.200H6.800L8.500 2H15V5H1.600V13.700H0.400z" fill="#7a7a7a"/><path d="M3.500 5.100H15.900L14.900 13.700H1.900z" fill="#e8b25e"/></svg>
<div style="left:548.7px;top:519px;width:370.29999999999995px;height:12px;line-height:12px;overflow:hidden;white-space:pre;font-size:11px;letter-spacing:-0.08px;font-family:'Liberation Sans', sans-serif">1.4.2 - Requisiti particolari per i ripari</div>
<div style="left:505px;top:544px;width:9px;height:1px;background:repeating-linear-gradient(90deg,#606060 0 1px,transparent 1px 2px)"></div>
<div style="left:514px;top:536px;width:13px;height:13px;border:1px solid #333;background:#fff;box-sizing:border-box"></div>
<svg style="left:528px;top:535px" width="14" height="16" viewBox="0 0 14 16"><rect x="0" y="1.200" width="14" height="14.800" rx="1.200" fill="#a3bfe3"/><rect x="1.700" y="4" width="10.600" height="10.200" fill="#fff"/><rect x="2.300" y="0" width="1.800" height="3.400" fill="#ececec"/><rect x="6.100" y="0" width="1.800" height="3.400" fill="#ececec"/><rect x="9.900" y="0" width="1.800" height="3.400" fill="#ececec"/><path d="M4 5.500H10M4 7.500H10M4 9.500H10M4 11.500H10" stroke="#c6c6c6" stroke-width="1"/></svg>
<div style="left:548.7px;top:537px;width:370.29999999999995px;height:12px;line-height:12px;overflow:hidden;white-space:pre;font-size:11px;letter-spacing:-0.096px;font-family:'Liberation Sans', sans-serif">1.4.3 - Requisiti particolari per i dispositivi di protezione</div>
<svg style="left:480px;top:558px" width="9" height="9" viewBox="0 0 9 9"><defs><linearGradient id="eg" x1="0" y1="0" x2="0" y2="1"><stop offset="0.450" stop-color="#fff"/><stop offset="1" stop-color="#dcdcdc"/></linearGradient></defs><rect x="0.500" y="0.500" width="8" height="8" rx="1.500" fill="url(#eg)" stroke="#8e8e8e"/><path d="M2 4.500H7" stroke="#3a52b4" stroke-width="1"/></svg>
<div style="left:490px;top:562px;width:5px;height:1px;background:repeating-linear-gradient(90deg,#606060 0 1px,transparent 1px 2px)"></div>
<div style="left:495px;top:554px;width:13px;height:13px;border:1px solid #333;background:#fff;box-sizing:border-box"></div>
<svg style="left:508px;top:555px" width="16" height="15" viewBox="0 0 16 15"><path d="M0.400 0.200H6.800L8.500 2H15V5H1.600V13.700H0.400z" fill="#7a7a7a"/><path d="M3.500 5.100H15.900L14.900 13.700H1.900z" fill="#e8b25e"/></svg>
<div style="left:529.5px;top:555px;width:389.5px;height:12px;line-height:12px;overflow:hidden;white-space:pre;font-size:11px;letter-spacing:-0.126px;font-family:'Liberation Sans', sans-serif">1.5 - Rischi dovuti ad altri pericoli</div>
<div style="left:505px;top:580px;width:9px;height:1px;background:repeating-linear-gradient(90deg,#606060 0 1px,transparent 1px 2px)"></div>
<div style="left:514px;top:572px;width:13px;height:13px;border:1px solid #333;background:#fff;box-sizing:border-box"></div>
<svg style="left:528px;top:571px" width="14" height="16" viewBox="0 0 14 16"><rect x="0" y="1.200" width="14" height="14.800" rx="1.200" fill="#a3bfe3"/><rect x="1.700" y="4" width="10.600" height="10.200" fill="#fff"/><rect x="2.300" y="0" width="1.800" height="3.400" fill="#ececec"/><rect x="6.100" y="0" width="1.800" height="3.400" fill="#ececec"/><rect x="9.900" y="0" width="1.800" height="3.400" fill="#ececec"/><path d="M4 5.500H10M4 7.500H10M4 9.500H10M4 11.500H10" stroke="#c6c6c6" stroke-width="1"/></svg>
<div style="left:548.7px;top:573px;width:370.29999999999995px;height:12px;line-height:12px;overflow:hidden;white-space:pre;font-size:11px;letter-spacing:-0.047px;font-family:'Liberation Sans', sans-serif">1.5.1 - Energia elettrica</div>
<div style="left:505px;top:598px;width:9px;height:1px;background:repeating-linear-gradient(90deg,#606060 0 1px,transparent 1px 2px)"></div>
<div style="left:514px;top:590px;width:13px;height:13px;border:1px solid #333;background:#fff;box-sizing:border-box"></div>
<svg style="left:528px;top:589px" width="14" height="16" viewBox="0 0 14 16"><rect x="0" y="1.200" width="14" height="14.800" rx="1.200" fill="#a3bfe3"/><rect x="1.700" y="4" width="10.600" height="10.200" fill="#fff"/><rect x="2.300" y="0" width="1.800" height="3.400" fill="#ececec"/><rect x="6.100" y="0" width="1.800" height="3.400" fill="#ececec"/><rect x="9.900" y="0" width="1.800" height="3.400" fill="#ececec"/><path d="M4 5.500H10M4 7.500H10M4 9.500H10M4 11.500H10" stroke="#c6c6c6" stroke-width="1"/></svg>
<div style="left:548.7px;top:591px;width:370.29999999999995px;height:12px;line-height:12px;overflow:hidden;white-space:pre;font-size:11px;letter-spacing:0.008px;font-family:'Liberation Sans', sans-serif">1.5.2 - Elettricità statica</div>
<div style="left:505px;top:616px;width:9px;height:1px;background:repeating-linear-gradient(90deg,#606060 0 1px,transparent 1px 2px)"></div>
<div style="left:514px;top:608px;width:13px;height:13px;border:1px solid #333;background:#fff;box-sizing:border-box"></div>
<svg style="left:528px;top:607px" width="14" height="16" viewBox="0 0 14 16"><rect x="0" y="1.200" width="14" height="14.800" rx="1.200" fill="#a3bfe3"/><rect x="1.700" y="4" width="10.600" height="10.200" fill="#fff"/><rect x="2.300" y="0" width="1.800" height="3.400" fill="#ececec"/><rect x="6.100" y="0" width="1.800" height="3.400" fill="#ececec"/><rect x="9.900" y="0" width="1.800" height="3.400" fill="#ececec"/><path d="M4 5.500H10M4 7.500H10M4 9.500H10M4 11.500H10" stroke="#c6c6c6" stroke-width="1"/></svg>
<div style="left:548.7px;top:609px;width:370.29999999999995px;height:12px;line-height:12px;overflow:hidden;white-space:pre;font-size:11px;letter-spacing:-0.08px;font-family:'Liberation Sans', sans-serif">1.5.3 - Energie diverse dall'energia elettrica</div>
<div style="left:505px;top:634px;width:9px;height:1px;background:repeating-linear-gradient(90deg,#606060 0 1px,transparent 1px 2px)"></div>
<div style="left:514px;top:626px;width:13px;height:13px;border:1px solid #333;background:#fff;box-sizing:border-box"></div>
<svg style="left:528px;top:625px" width="14" height="16" viewBox="0 0 14 16"><rect x="0" y="1.200" width="14" height="14.800" rx="1.200" fill="#a3bfe3"/><rect x="1.700" y="4" width="10.600" height="10.200" fill="#fff"/><rect x="2.300" y="0" width="1.800" height="3.400" fill="#ececec"/><rect x="6.100" y="0" width="1.800" height="3.400" fill="#ececec"/><rect x="9.900" y="0" width="1.800" height="3.400" fill="#ececec"/><path d="M4 5.500H10M4 7.500H10M4 9.500H10M4 11.500H10" stroke="#c6c6c6" stroke-width="1"/></svg>
<div style="left:548.7px;top:627px;width:370.29999999999995px;height:12px;line-height:12px;overflow:hidden;white-space:pre;font-size:11px;letter-spacing:-0.097px;font-family:'Liberation Sans', sans-serif">1.5.4 - Errori di montaggio</div>
<div style="left:505px;top:652px;width:9px;height:1px;background:repeating-linear-gradient(90deg,#606060 0 1px,transparent 1px 2px)"></div>
<div style="left:514px;top:644px;width:13px;height:13px;border:1px solid #333;background:#fff;box-sizing:border-box"></div>
<svg style="left:528px;top:643px" width="14" height="16" viewBox="0 0 14 16"><rect x="0" y="1.200" width="14" height="14.800" rx="1.200" fill="#a3bfe3"/><rect x="1.700" y="4" width="10.600" height="10.200" fill="#fff"/><rect x="2.300" y="0" width="1.800" height="3.400" fill="#ececec"/><rect x="6.100" y="0" width="1.800" height="3.400" fill="#ececec"/><rect x="9.900" y="0" width="1.800" height="3.400" fill="#ececec"/><path d="M4 5.500H10M4 7.500H10M4 9.500H10M4 11.500H10" stroke="#c6c6c6" stroke-width="1"/></svg>
<div style="left:548.7px;top:645px;width:370.29999999999995px;height:12px;line-height:12px;overflow:hidden;white-space:pre;font-size:11px;letter-spacing:-0.011px;font-family:'Liberation Sans', sans-serif">1.5.5 - Temperature estreme</div>
<div style="left:505px;top:670px;width:9px;height:1px;background:repeating-linear-gradient(90deg,#606060 0 1px,transparent 1px 2px)"></div>
<div style="left:514px;top:662px;width:13px;height:13px;border:1px solid #333;background:#fff;box-sizing:border-box"></div>
<svg style="left:528px;top:661px" width="14" height="16" viewBox="0 0 14 16"><rect x="0" y="1.200" width="14" height="14.800" rx="1.200" fill="#a3bfe3"/><rect x="1.700" y="4" width="10.600" height="10.200" fill="#fff"/><rect x="2.300" y="0" width="1.800" height="3.400" fill="#ececec"/><rect x="6.100" y="0" width="1.800" height="3.400" fill="#ececec"/><rect x="9.900" y="0" width="1.800" height="3.400" fill="#ececec"/><path d="M4 5.500H10M4 7.500H10M4 9.500H10M4 11.500H10" stroke="#c6c6c6" stroke-width="1"/></svg>
<div style="left:548.7px;top:663px;width:370.29999999999995px;height:12px;line-height:12px;overflow:hidden;white-space:pre;font-size:11px;letter-spacing:-0.018px;font-family:'Liberation Sans', sans-serif">1.5.6 - Incendio</div>
<div style="left:505px;top:688px;width:9px;height:1px;background:repeating-linear-gradient(90deg,#606060 0 1px,transparent 1px 2px)"></div>
<div style="left:514px;top:680px;width:13px;height:13px;border:1px solid #333;background:#fff;box-sizing:border-box"></div>
<svg style="left:528px;top:679px" width="14" height="16" viewBox="0 0 14 16"><rect x="0" y="1.200" width="14" height="14.800" rx="1.200" fill="#a3bfe3"/><rect x="1.700" y="4" width="10.600" height="10.200" fill="#fff"/><rect x="2.300" y="0" width="1.800" height="3.400" fill="#ececec"/><rect x="6.100" y="0" width="1.800" height="3.400" fill="#ececec"/><rect x="9.900" y="0" width="1.800" height="3.400" fill="#ececec"/><path d="M4 5.500H10M4 7.500H10M4 9.500H10M4 11.500H10" stroke="#c6c6c6" stroke-width="1"/></svg>
<div style="left:548.7px;top:681px;width:370.29999999999995px;height:12px;line-height:12px;overflow:hidden;white-space:pre;font-size:11px;letter-spacing:-0.195px;font-family:'Liberation Sans', sans-serif">1.5.7 - Esplosione</div>
<div style="left:505px;top:706px;width:9px;height:1px;background:repeating-linear-gradient(90deg,#606060 0 1px,transparent 1px 2px)"></div>
<div style="left:514px;top:698px;width:13px;height:13px;border:1px solid #333;background:#fff;box-sizing:border-box"></div>
<svg style="left:528px;top:697px" width="14" height="16" viewBox="0 0 14 16"><rect x="0" y="1.200" width="14" height="14.800" rx="1.200" fill="#a3bfe3"/><rect x="1.700" y="4" width="10.600" height="10.200" fill="#fff"/><rect x="2.300" y="0" width="1.800" height="3.400" fill="#ececec"/><rect x="6.100" y="0" width="1.800" height="3.400" fill="#ececec"/><rect x="9.900" y="0" width="1.800" height="3.400" fill="#ececec"/><path d="M4 5.500H10M4 7.500H10M4 9.500H10M4 11.500H10" stroke="#c6c6c6" stroke-width="1"/></svg>
<div style="left:548.7px;top:699px;width:370.29999999999995px;height:12px;line-height:12px;overflow:hidden;white-space:pre;font-size:11px;letter-spacing:-0.13px;font-family:'Liberation Sans', sans-serif">1.5.8 - Rumore</div>
<div style="left:505px;top:724px;width:9px;height:1px;background:repeating-linear-gradient(90deg,#606060 0 1px,transparent 1px 2px)"></div>
<div style="left:514px;top:716px;width:13px;height:13px;border:1px solid #333;background:#fff;box-sizing:border-box"></div>
<svg style="left:528px;top:715px" width="14" height="16" viewBox="0 0 14 16"><rect x="0" y="1.200" width="14" height="14.800" rx="1.200" fill="#a3bfe3"/><rect x="1.700" y="4" width="10.600" height="10.200" fill="#fff"/><rect x="2.300" y="0" width="1.800" height="3.400" fill="#ececec"/><rect x="6.100" y="0" width="1.800" height="3.400" fill="#ececec"/><rect x="9.900" y="0" width="1.800" height="3.400" fill="#ececec"/><path d="M4 5.500H10M4 7.500H10M4 9.500H10M4 11.500H10" stroke="#c6c6c6" stroke-width="1"/></svg>
<div style="left:548.7px;top:717px;width:370.29999999999995px;height:12px;line-height:12px;overflow:hidden;white-space:pre;font-size:11px;letter-spacing:-0.156px;font-family:'Liberation Sans', sans-serif">1.5.9 - Vibrazioni</div>
<div style="left:505px;top:742px;width:9px;height:1px;background:repeating-linear-gradient(90deg,#606060 0 1px,transparent 1px 2px)"></div>
<div style="left:514px;top:734px;width:13px;height:13px;border:1px solid #333;background:#fff;box-sizing:border-box"></div>
<svg style="left:528px;top:733px" width="14" height="16" viewBox="0 0 14 16"><rect x="0" y="1.200" width="14" height="14.800" rx="1.200" fill="#a3bfe3"/><rect x="1.700" y="4" width="10.600" height="10.200" fill="#fff"/><rect x="2.300" y="0" width="1.800" height="3.400" fill="#ececec"/><rect x="6.100" y="0" width="1.800" height="3.400" fill="#ececec"/><rect x="9.900" y="0" width="1.800" height="3.400" fill="#ececec"/><path d="M4 5.500H10M4 7.500H10M4 9.500H10M4 11.500H10" stroke="#c6c6c6" stroke-width="1"/></svg>
<div style="left:548.7px;top:735px;width:370.29999999999995px;height:12px;line-height:12px;overflow:hidden;white-space:pre;font-size:11px;letter-spacing:-0.168px;font-family:'Liberation Sans', sans-serif">1.5.10 - Radiazioni</div>
<div style="left:505px;top:760px;width:9px;height:1px;background:repeating-linear-gradient(90deg,#606060 0 1px,transparent 1px 2px)"></div>
<div style="left:514px;top:752px;width:13px;height:13px;border:1px solid #333;background:#fff;box-sizing:border-box"></div>
<svg style="left:528px;top:751px" width="14" height="16" viewBox="0 0 14 16"><rect x="0" y="1.200" width="14" height="14.800" rx="1.200" fill="#a3bfe3"/><rect x="1.700" y="4" width="10.600" height="10.200" fill="#fff"/><rect x="2.300" y="0" width="1.800" height="3.400" fill="#ececec"/><rect x="6.100" y="0" width="1.800" height="3.400" fill="#ececec"/><rect x="9.900" y="0" width="1.800" height="3.400" fill="#ececec"/><path d="M4 5.500H10M4 7.500H10M4 9.500H10M4 11.500H10" stroke="#c6c6c6" stroke-width="1"/></svg>
<div style="left:548.7px;top:753px;width:370.29999999999995px;height:12px;line-height:12px;overflow:hidden;white-space:pre;font-size:11px;letter-spacing:-0.066px;font-family:'Liberation Sans', sans-serif">1.5.11 - Radiazione esterne</div>
<div style="left:505px;top:778px;width:9px;height:1px;background:repeating-linear-gradient(90deg,#606060 0 1px,transparent 1px 2px)"></div>
<div style="left:514px;top:770px;width:13px;height:13px;border:1px solid #333;background:#fff;box-sizing:border-box"></div>
<svg style="left:528px;top:769px" width="14" height="16" viewBox="0 0 14 16"><rect x="0" y="1.200" width="14" height="14.800" rx="1.200" fill="#a3bfe3"/><rect x="1.700" y="4" width="10.600" height="10.200" fill="#fff"/><rect x="2.300" y="0" width="1.800" height="3.400" fill="#ececec"/><rect x="6.100" y="0" width="1.800" height="3.400" fill="#ececec"/><rect x="9.900" y="0" width="1.800" height="3.400" fill="#ececec"/><path d="M4 5.500H10M4 7.500H10M4 9.500H10M4 11.500H10" stroke="#c6c6c6" stroke-width="1"/></svg>
<div style="left:548.7px;top:771px;width:370.29999999999995px;height:12px;line-height:12px;overflow:hidden;white-space:pre;font-size:11px;letter-spacing:-0.183px;font-family:'Liberation Sans', sans-serif">1.5.12 - Radiazioni laser</div>
<div style="left:505px;top:796px;width:9px;height:1px;background:repeating-linear-gradient(90deg,#606060 0 1px,transparent 1px 2px)"></div>
<div style="left:514px;top:788px;width:13px;height:13px;border:1px solid #333;background:#fff;box-sizing:border-box"></div>
<svg style="left:528px;top:787px" width="14" height="16" viewBox="0 0 14 16"><rect x="0" y="1.200" width="14" height="14.800" rx="1.200" fill="#a3bfe3"/><rect x="1.700" y="4" width="10.600" height="10.200" fill="#fff"/><rect x="2.300" y="0" width="1.800" height="3.400" fill="#ececec"/><rect x="6.100" y="0" width="1.800" height="3.400" fill="#ececec"/><rect x="9.900" y="0" width="1.800" height="3.400" fill="#ececec"/><path d="M4 5.500H10M4 7.500H10M4 9.500H10M4 11.500H10" stroke="#c6c6c6" stroke-width="1"/></svg>
<div style="left:548.7px;top:789px;width:370.29999999999995px;height:12px;line-height:12px;overflow:hidden;white-space:pre;font-size:11px;letter-spacing:-0.19px;font-family:'Liberation Sans', sans-serif">1.5.13 - Emissioni di materie e sostanze pericolose</div>
<div style="left:505px;top:814px;width:9px;height:1px;background:repeating-linear-gradient(90deg,#606060 0 1px,transparent 1px 2px)"></div>
<div style="left:514px;top:806px;width:13px;height:13px;border:1px solid #333;background:#fff;box-sizing:border-box"></div>
<svg style="left:528px;top:805px" width="14" height="16" viewBox="0 0 14 16"><rect x="0" y="1.200" width="14" height="14.800" rx="1.200" fill="#a3bfe3"/><rect x="1.700" y="4" width="10.600" height="10.200" fill="#fff"/><rect x="2.300" y="0" width="1.800" height="3.400" fill="#ececec"/><rect x="6.100" y="0" width="1.800" height="3.400" fill="#ececec"/><rect x="9.900" y="0" width="1.800" height="3.400" fill="#ececec"/><path d="M4 5.500H10M4 7.500H10M4 9.500H10M4 11.500H10" stroke="#c6c6c6" stroke-width="1"/></svg>
<div style="left:548.7px;top:807px;width:370.29999999999995px;height:12px;line-height:12px;overflow:hidden;white-space:pre;font-size:11px;letter-spacing:-0.17px;font-family:'Liberation Sans', sans-serif">1.5.14 - Rischio di restare imprigionati in una macchina</div>
<div style="left:505px;top:832px;width:9px;height:1px;background:repeating-linear-gradient(90deg,#606060 0 1px,transparent 1px 2px)"></div>
<div style="left:514px;top:824px;width:13px;height:13px;border:1px solid #333;background:#fff;box-sizing:border-box"></div>
<svg style="left:528px;top:823px" width="14" height="16" viewBox="0 0 14 16"><rect x="0" y="1.200" width="14" height="14.800" rx="1.200" fill="#a3bfe3"/><rect x="1.700" y="4" width="10.600" height="10.200" fill="#fff"/><rect x="2.300" y="0" width="1.800" height="3.400" fill="#ececec"/><rect x="6.100" y="0" width="1.800" height="3.400" fill="#ececec"/><rect x="9.900" y="0" width="1.800" height="3.400" fill="#ececec"/><path d="M4 5.500H10M4 7.500H10M4 9.500H10M4 11.500H10" stroke="#c6c6c6" stroke-width="1"/></svg>
<div style="left:548.7px;top:825px;width:370.29999999999995px;height:12px;line-height:12px;overflow:hidden;white-space:pre;font-size:11px;letter-spacing:-0.164px;font-family:'Liberation Sans', sans-serif">1.5.15 - Rischio di scivolamento, inciampo o caduta</div>
<div style="left:505px;top:850px;width:9px;height:1px;background:repeating-linear-gradient(90deg,#606060 0 1px,transparent 1px 2px)"></div>
<div style="left:514px;top:842px;width:13px;height:13px;border:1px solid #333;background:#fff;box-sizing:border-box"></div>
<svg style="left:528px;top:841px" width="14" height="16" viewBox="0 0 14 16"><rect x="0" y="1.200" width="14" height="14.800" rx="1.200" fill="#a3bfe3"/><rect x="1.700" y="4" width="10.600" height="10.200" fill="#fff"/><rect x="2.300" y="0" width="1.800" height="3.400" fill="#ececec"/><rect x="6.100" y="0" width="1.800" height="3.400" fill="#ececec"/><rect x="9.900" y="0" width="1.800" height="3.400" fill="#ececec"/><path d="M4 5.500H10M4 7.500H10M4 9.500H10M4 11.500H10" stroke="#c6c6c6" stroke-width="1"/></svg>
<div style="left:548.7px;top:843px;width:370.29999999999995px;height:12px;line-height:12px;overflow:hidden;white-space:pre;font-size:11px;letter-spacing:-0.199px;font-family:'Liberation Sans', sans-serif">1.5.16 - Fulmine</div>
<svg style="left:480px;top:864px" width="9" height="9" viewBox="0 0 9 9"><defs><linearGradient id="eg" x1="0" y1="0" x2="0" y2="1"><stop offset="0.450" stop-color="#fff"/><stop offset="1" stop-color="#dcdcdc"/></linearGradient></defs><rect x="0.500" y="0.500" width="8" height="8" rx="1.500" fill="url(#eg)" stroke="#8e8e8e"/><path d="M2 4.500H7" stroke="#3a52b4" stroke-width="1"/></svg>
<div style="left:490px;top:868px;width:5px;height:1px;background:repeating-linear-gradient(90deg,#606060 0 1px,transparent 1px 2px)"></div>
<div style="left:495px;top:860px;width:13px;height:13px;border:1px solid #333;background:#fff;box-sizing:border-box"></div>
<svg style="left:508px;top:861px" width="16" height="15" viewBox="0 0 16 15"><path d="M0.400 0.200H6.800L8.500 2H15V5H1.600V13.700H0.400z" fill="#7a7a7a"/><path d="M3.500 5.100H15.900L14.900 13.700H1.900z" fill="#e8b25e"/></svg>
<div style="left:529.5px;top:861px;width:389.5px;height:12px;line-height:12px;overflow:hidden;white-space:pre;font-size:11px;letter-spacing:-0.143px;font-family:'Liberation Sans', sans-serif">1.6 - Manutenzione</div>
<div style="left:505px;top:886px;width:9px;height:1px;background:repeating-linear-gradient(90deg,#606060 0 1px,transparent 1px 2px)"></div>
<div style="left:514px;top:878px;width:13px;height:13px;border:1px solid #333;background:#fff;box-sizing:border-box"></div>
<svg style="left:528px;top:877px" width="14" height="16" viewBox="0 0 14 16"><rect x="0" y="1.200" width="14" height="14.800" rx="1.200" fill="#a3bfe3"/><rect x="1.700" y="4" width="10.600" height="10.200" fill="#fff"/><rect x="2.300" y="0" width="1.800" height="3.400" fill="#ececec"/><rect x="6.100" y="0" width="1.800" height="3.400" fill="#ececec"/><rect x="9.900" y="0" width="1.800" height="3.400" fill="#ececec"/><path d="M4 5.500H10M4 7.500H10M4 9.500H10M4 11.500H10" stroke="#c6c6c6" stroke-width="1"/></svg>
<div style="left:548.7px;top:879px;width:370.29999999999995px;height:12px;line-height:12px;overflow:hidden;white-space:pre;font-size:11px;letter-spacing:-0.177px;font-family:'Liberation Sans', sans-serif">1.6.1 - Manutenzione della macchina</div>
<div style="left:505px;top:904px;width:9px;height:1px;background:repeating-linear-gradient(90deg,#606060 0 1px,transparent 1px 2px)"></div>
<div style="left:514px;top:896px;width:13px;height:13px;border:1px solid #333;background:#fff;box-sizing:border-box"></div>
<svg style="left:528px;top:895px" width="14" height="16" viewBox="0 0 14 16"><rect x="0" y="1.200" width="14" height="14.800" rx="1.200" fill="#a3bfe3"/><rect x="1.700" y="4" width="10.600" height="10.200" fill="#fff"/><rect x="2.300" y="0" width="1.800" height="3.400" fill="#ececec"/><rect x="6.100" y="0" width="1.800" height="3.400" fill="#ececec"/><rect x="9.900" y="0" width="1.800" height="3.400" fill="#ececec"/><path d="M4 5.500H10M4 7.500H10M4 9.500H10M4 11.500H10" stroke="#c6c6c6" stroke-width="1"/></svg>
<div style="left:548.7px;top:897px;width:370.29999999999995px;height:12px;line-height:12px;overflow:hidden;white-space:pre;font-size:11px;letter-spacing:-0.084px;font-family:'Liberation Sans', sans-serif">1.6.2 - Accesso ai posti di lavoro e ai punti d'intervento utilizzati per la manutenzione</div>
<div style="left:505px;top:922px;width:9px;height:1px;background:repeating-linear-gradient(90deg,#606060 0 1px,transparent 1px 2px)"></div>
<div style="left:514px;top:914px;width:13px;height:13px;border:1px solid #333;background:#fff;box-sizing:border-box"></div>
<svg style="left:528px;top:913px" width="14" height="16" viewBox="0 0 14 16"><rect x="0" y="1.200" width="14" height="14.800" rx="1.200" fill="#a3bfe3"/><rect x="1.700" y="4" width="10.600" height="10.200" fill="#fff"/><rect x="2.300" y="0" width="1.800" height="3.400" fill="#ececec"/><rect x="6.100" y="0" width="1.800" height="3.400" fill="#ececec"/><rect x="9.900" y="0" width="1.800" height="3.400" fill="#ececec"/><path d="M4 5.500H10M4 7.500H10M4 9.500H10M4 11.500H10" stroke="#c6c6c6" stroke-width="1"/></svg>
<div style="left:548.7px;top:915px;width:370.29999999999995px;height:12px;line-height:12px;overflow:hidden;white-space:pre;font-size:11px;letter-spacing:-0.097px;font-family:'Liberation Sans', sans-serif">1.6.3 - Isolamento dalle fonti di alimentazione di energia</div>
<div style="left:505px;top:940px;width:9px;height:1px;background:repeating-linear-gradient(90deg,#606060 0 1px,transparent 1px 2px)"></div>
<div style="left:514px;top:932px;width:13px;height:13px;border:1px solid #333;background:#fff;box-sizing:border-box"></div>
<svg style="left:528px;top:931px" width="14" height="16" viewBox="0 0 14 16"><rect x="0" y="1.200" width="14" height="14.800" rx="1.200" fill="#a3bfe3"/><rect x="1.700" y="4" width="10.600" height="10.200" fill="#fff"/><rect x="2.300" y="0" width="1.800" height="3.400" fill="#ececec"/><rect x="6.100" y="0" width="1.800" height="3.400" fill="#ececec"/><rect x="9.900" y="0" width="1.800" height="3.400" fill="#ececec"/><path d="M4 5.500H10M4 7.500H10M4 9.500H10M4 11.500H10" stroke="#c6c6c6" stroke-width="1"/></svg>
<div style="left:548.7px;top:933px;width:370.29999999999995px;height:12px;line-height:12px;overflow:hidden;white-space:pre;font-size:11px;letter-spacing:0.081px;font-family:'Liberation Sans', sans-serif">1.6.4 - Intervento dell'operatore</div>
<div style="left:505px;top:958px;width:9px;height:1px;background:repeating-linear-gradient(90deg,#606060 0 1px,transparent 1px 2px)"></div>
<div style="left:514px;top:950px;width:13px;height:13px;border:1px solid #333;background:#fff;box-sizing:border-box"></div>
<svg style="left:528px;top:949px" width="14" height="16" viewBox="0 0 14 16"><rect x="0" y="1.200" width="14" height="14.800" rx="1.200" fill="#a3bfe3"/><rect x="1.700" y="4" width="10.600" height="10.200" fill="#fff"/><rect x="2.300" y="0" width="1.800" height="3.400" fill="#ececec"/><rect x="6.100" y="0" width="1.800" height="3.400" fill="#ececec"/><rect x="9.900" y="0" width="1.800" height="3.400" fill="#ececec"/><path d="M4 5.500H10M4 7.500H10M4 9.500H10M4 11.500H10" stroke="#c6c6c6" stroke-width="1"/></svg>
<div style="left:548.7px;top:951px;width:370.29999999999995px;height:12px;line-height:12px;overflow:hidden;white-space:pre;font-size:11px;letter-spacing:-0.047px;font-family:'Liberation Sans', sans-serif">1.6.5 - Pulitura delle parti interne</div>
<div style="left:920px;top:174px;width:15px;height:795px;background:#f0f0f0"></div>
<div style="left:920px;top:329px;width:15px;height:608px;background:#cdcdcd"></div>
<svg style="left:924px;top:180px" width="7" height="6" viewBox="0 0 7 6"><path d="M0.700 5L3.500 1.800L6.300 5" stroke="#404040" stroke-width="2" fill="none"/></svg>
<svg style="left:924px;top:957px" width="7" height="6" viewBox="0 0 7 6"><path d="M0.700 1L3.500 4.200L6.300 1" stroke="#404040" stroke-width="2" fill="none"/></svg>
<div style="left:454px;top:969px;width:481px;height:15px;background:#f0f0f0"></div>
<div style="left:471px;top:969px;width:400px;height:15px;background:#cdcdcd"></div>
<svg style="left:459px;top:973px" width="6" height="7" viewBox="0 0 6 7"><path d="M5 0.700L1.800 3.500L5 6.300" stroke="#404040" stroke-width="2" fill="none"/></svg>
<svg style="left:908px;top:973px" width="6" height="7" viewBox="0 0 6 7"><path d="M1 0.700L4.200 3.500L1 6.300" stroke="#404040" stroke-width="2" fill="none"/></svg>
<div style="left:454px;top:984px;width:1226px;height:1px;background:#9a9a9a"></div>
<div style="left:935px;top:120px;width:5px;height:864px;background:#f0f0f0"></div>
<div style="left:935px;top:150px;width:1px;height:21px;background:#fff"></div>
<div style="left:940px;top:120px;width:739px;height:51px;background:#f5f6f7"></div>
<div style="left:944px;top:126px;width:2px;height:2px;background:#fff"></div>
<div style="left:943px;top:125px;width:2px;height:2px;background:#a3a3a3"></div>
<div style="left:944px;top:130px;width:2px;height:2px;background:#fff"></div>
<div style="left:943px;top:129px;width:2px;height:2px;background:#a3a3a3"></div>
<div style="left:944px;top:134px;width:2px;height:2px;background:#fff"></div>
<div style="left:943px;top:133px;width:2px;height:2px;background:#a3a3a3"></div>
<div style="left:944px;top:138px;width:2px;height:2px;background:#fff"></div>
<div style="left:943px;top:137px;width:2px;height:2px;background:#a3a3a3"></div>
<div style="left:944px;top:142px;width:2px;height:2px;background:#fff"></div>
<div style="left:943px;top:141px;width:2px;height:2px;background:#a3a3a3"></div>
<div style="left:944px;top:146px;width:2px;height:2px;background:#fff"></div>
<div style="left:943px;top:145px;width:2px;height:2px;background:#a3a3a3"></div>
<div style="left:944px;top:150px;width:2px;height:2px;background:#fff"></div>
<div style="left:943px;top:149px;width:2px;height:2px;background:#a3a3a3"></div>
<div style="left:944px;top:154px;width:2px;height:2px;background:#fff"></div>
<div style="left:943px;top:153px;width:2px;height:2px;background:#a3a3a3"></div>
<div style="left:944px;top:158px;width:2px;height:2px;background:#fff"></div>
<div style="left:943px;top:157px;width:2px;height:2px;background:#a3a3a3"></div>
<div style="left:944px;top:162px;width:2px;height:2px;background:#fff"></div>
<div style="left:943px;top:161px;width:2px;height:2px;background:#a3a3a3"></div>
<svg style="left:972px;top:125px" width="24" height="24" viewBox="0 0 24 24"><circle cx="12" cy="12" r="10.700" fill="#fff" stroke="#2f6cb0" stroke-width="2.200"/><path d="M18 10H11.5V6.500L5 12L11.5 17.500V14H18z" fill="#2f6cb0"/></svg>
<div style="left:954px;top:150px;height:14px;line-height:14px;font-size:12px;color:#000;font-family:'Liberation Sans', sans-serif;white-space:pre;letter-spacing:-0.189px;">Precedente</div>
<div style="left:1024px;top:127px;height:11px;line-height:11px;font-size:10px;color:#000;font-family:'DejaVu Sans', 'Liberation Sans', sans-serif;white-space:pre;">1</div>
<div style="left:1026px;top:142px;height:24px;line-height:24px;font-size:20px;color:#000;font-family:'DejaVu Sans', 'Liberation Sans', sans-serif;white-space:pre;letter-spacing:-0.624px;word-spacing:2.5px;">Requisiti essenziali di sicurezza e di tutela d...</div>
<svg style="left:1632px;top:125px" width="24" height="24" viewBox="0 0 24 24"><circle cx="12" cy="12" r="10.700" fill="#fff" stroke="#2f6cb0" stroke-width="2.200"/><path d="M6 10H12.5V6.500L19 12L12.5 17.500V14H6z" fill="#2f6cb0"/></svg>
<div style="left:1615px;top:150px;height:14px;line-height:14px;font-size:12px;color:#000;font-family:'Liberation Sans', sans-serif;white-space:pre;letter-spacing:-0.42px;">Successivo</div>
<div style="left:940px;top:171px;width:739px;height:813px;background:#f0f0f0"></div>
<div style="left:1679px;top:50px;width:1px;height:935px;background:#8e8e8e"></div>
<div style="left:0px;top:985px;width:1680px;height:25px;background:#f5f6f7"></div>
<div style="left:1272px;top:988px;width:1px;height:20px;background:#a0a0a0"></div>
<div style="left:1277px;top:991px;height:14px;line-height:14px;font-size:12px;color:#000;font-family:'Liberation Sans', sans-serif;white-space:pre;letter-spacing:-0.507px;">Schede:</div>
<svg style="left:1325px;top:990px" width="14" height="16" viewBox="0 0 14 16"><rect x="0" y="1.200" width="14" height="14.800" rx="1.200" fill="#a3bfe3"/><rect x="1.700" y="4" width="10.600" height="10.200" fill="#fff"/><rect x="2.300" y="0" width="1.800" height="3.400" fill="#ececec"/><rect x="6.100" y="0" width="1.800" height="3.400" fill="#ececec"/><rect x="9.900" y="0" width="1.800" height="3.400" fill="#ececec"/><path d="M4 5.500H10M4 7.500H10M4 9.500H10M4 11.500H10" stroke="#c6c6c6" stroke-width="1"/></svg>
<div style="left:1343px;top:991px;height:14px;line-height:14px;font-size:12px;color:#000;font-family:'Liberation Sans', sans-serif;white-space:pre;letter-spacing:-0.68px;">62</div>
<div style="left:1359px;top:988px;width:1px;height:20px;background:#a0a0a0"></div>
<svg style="left:1361px;top:990px" width="14" height="16" viewBox="0 0 14 16"><path d="M3 9L1.500 16L5 14L7 16V10z M11 9L12.500 16L9 14L7 16V10z" fill="#c9421f"/><circle cx="7" cy="6.500" r="6" fill="#e8693a" stroke="#c9421f" stroke-width="1" stroke-dasharray="1.500 1"/><circle cx="7" cy="6.500" r="3.500" fill="#f08a5d"/></svg>
<div style="left:1379px;top:991px;height:14px;line-height:14px;font-size:12px;color:#000;font-family:'Liberation Sans', sans-serif;white-space:pre;letter-spacing:-0.248px;">Dir. 2006/42/CE</div>
<div style="left:1466px;top:988px;width:1px;height:20px;background:#a0a0a0"></div>
<svg style="left:1470px;top:990px" width="14" height="16" viewBox="0 0 14 16"><circle cx="7" cy="4.300" r="3.900" fill="#8e1f1f"/><path d="M0 15.500C0 10.500 3 9.200 4.500 9L7 11.500L9.500 9C11 9.200 14 10.500 14 15.500z" fill="#8e1f1f"/></svg>
<div style="left:1488px;top:992px;height:14px;line-height:14px;font-size:12px;color:#000;font-family:'Liberation Sans', sans-serif;white-space:pre;letter-spacing:0.178px;">Administrator</div>
<svg style="left:1566px;top:996px" width="6" height="3" viewBox="0 0 6 3"><path d="M0 0h6l-3 3z" fill="#000"/></svg>
<div style="left:1576px;top:988px;width:1px;height:20px;background:#a0a0a0"></div>
<svg style="left:1577px;top:990px" width="16" height="16" viewBox="0 0 16 16"><g transform="rotate(-45 8 8)" fill="none" stroke="#3a76b8" stroke-width="2"><rect x="-1" y="5.200" width="9.800" height="5.600" rx="2.800"/><rect x="7.200" y="5.200" width="9.800" height="5.600" rx="2.800"/></g></svg>
<div style="left:1597px;top:991px;height:14px;line-height:14px;font-size:12px;color:#000;font-family:'Liberation Sans', sans-serif;white-space:pre;letter-spacing:0.062px;">cemfu</div>
<div style="left:1636px;top:988px;width:1px;height:20px;background:#a0a0a0"></div>
<svg style="left:1640px;top:991px" width="14" height="14" viewBox="0 0 14 14"><circle cx="7" cy="7" r="7" fill="#3a76b8"/><text x="7" y="9.700" font-size="7.500" text-anchor="middle" fill="#fff" font-family="Liberation Serif, serif">IT</text></svg>
<svg style="left:1657px;top:996px" width="6" height="3" viewBox="0 0 6 3"><path d="M0 0h6l-3 3z" fill="#000"/></svg>
</body></html>
